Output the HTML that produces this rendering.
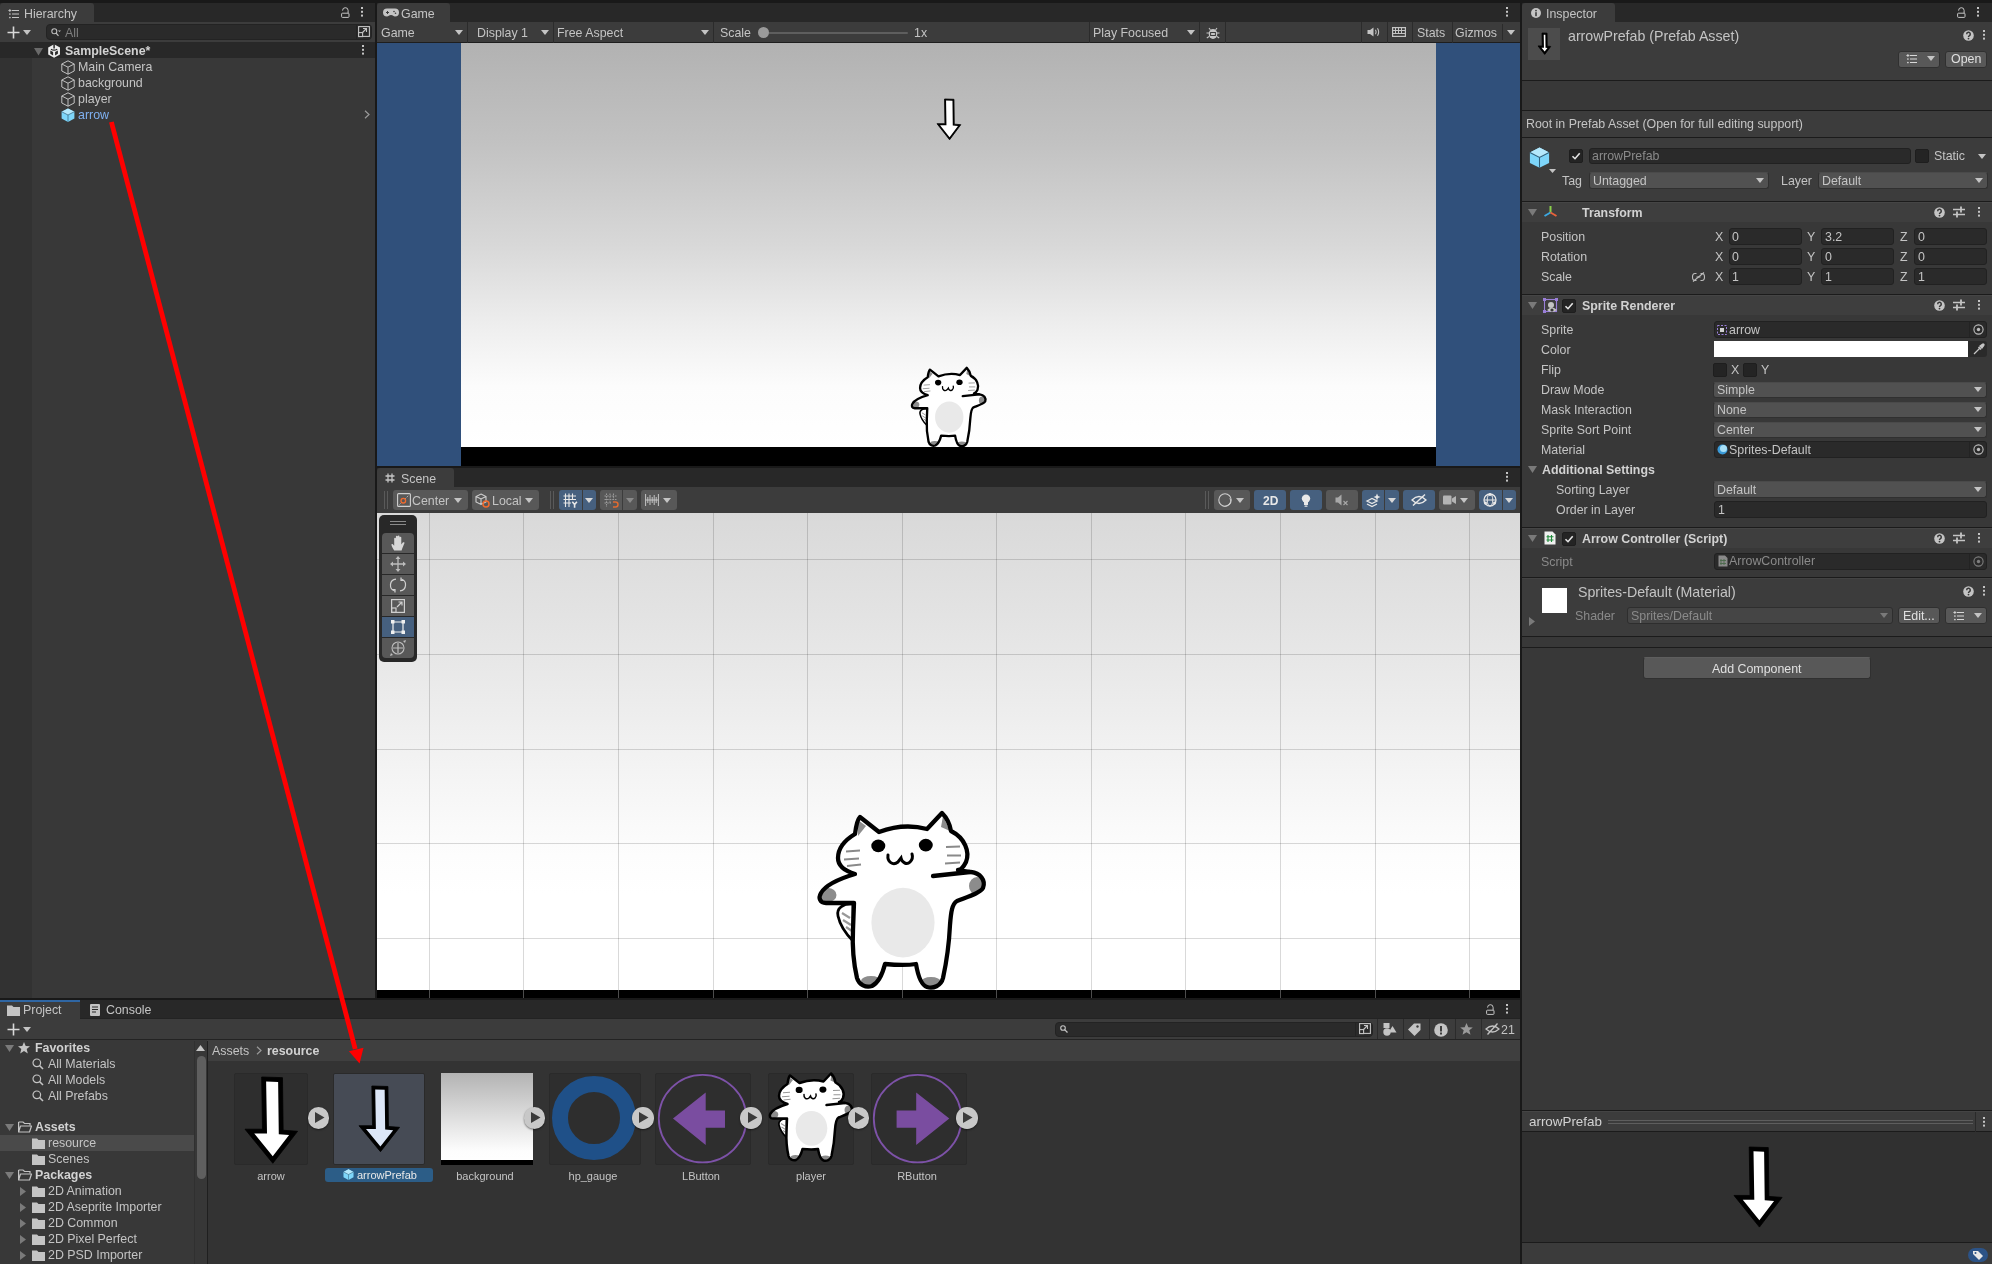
<!DOCTYPE html><html><head><meta charset="utf-8"><style>
*{box-sizing:border-box}
html,body{margin:0;padding:0}
body{-webkit-font-smoothing:antialiased;width:1992px;height:1264px;background:#191919;position:relative;overflow:hidden;font-family:"Liberation Sans",sans-serif;font-size:12.4px;color:#c4c4c4}
.a{position:absolute}
.t{position:absolute;white-space:pre;line-height:16px;height:16px;will-change:transform}
.b{font-weight:bold}
svg{overflow:visible}
</style></head><body><div class="a" style="left:0px;top:3px;width:375px;height:19px;background:#282828;"></div>
<div class="a" style="left:0px;top:3px;width:94px;height:19px;background:#3c3c3c;border-radius:3px 3px 0 0"></div>
<div class="a" style="left:0px;top:22px;width:375px;height:20px;background:#3c3c3c;"></div>
<div class="a" style="left:0px;top:42px;width:375px;height:16px;background:#282828;"></div>
<div class="a" style="left:0px;top:58px;width:375px;height:940px;background:#383838;"></div>
<div class="a" style="left:0px;top:58px;width:32px;height:940px;background:#323232;"></div>
<div class="a" style="left:377px;top:3px;width:1143px;height:19px;background:#282828;"></div>
<div class="a" style="left:377px;top:3px;width:73px;height:19px;background:#3c3c3c;border-radius:3px 3px 0 0"></div>
<div class="a" style="left:377px;top:22px;width:1143px;height:20px;background:#3c3c3c;"></div>
<div class="a" style="left:377px;top:42px;width:1143px;height:1px;background:#1e1e1e;"></div>
<div class="a" style="left:377px;top:43px;width:1143px;height:423px;background:#30507b;"></div>
<div class="a" style="left:461px;top:43px;width:975px;height:404px;background:linear-gradient(#b2b2b2,#c2c2c2 25%,#d8d8d8 50%,#eeeeee 70%,#fcfcfc 85%,#fff)"></div>
<div class="a" style="left:461px;top:447px;width:975px;height:19px;background:#000;"></div>
<div class="a" style="left:377px;top:468px;width:1143px;height:19px;background:#282828;"></div>
<div class="a" style="left:377px;top:468px;width:77px;height:19px;background:#3c3c3c;border-radius:3px 3px 0 0"></div>
<div class="a" style="left:377px;top:487px;width:1143px;height:26px;background:#3c3c3c;"></div>
<div class="a" style="left:377px;top:513px;width:1143px;height:477px;background:linear-gradient(#d9d9d9,#e7e7e7 30%,#efefef 45%,#f7f7f7 60%,#fdfdfd 72%,#ffffff 80%)"></div>
<div class="a" style="left:377px;top:990px;width:1143px;height:8px;background:#000;"></div>
<div class="a" style="left:1522px;top:3px;width:470px;height:19px;background:#282828;"></div>
<div class="a" style="left:1522px;top:3px;width:93px;height:19px;background:#3c3c3c;border-radius:3px 3px 0 0"></div>
<div class="a" style="left:1522px;top:22px;width:470px;height:1242px;background:#383838;"></div>
<div class="a" style="left:0px;top:1000px;width:1520px;height:18px;background:#282828;"></div>
<div class="a" style="left:0px;top:1000px;width:80px;height:19px;background:#3c3c3c;"></div>
<div class="a" style="left:0px;top:1000px;width:80px;height:2px;background:#2f66a3;"></div>
<div class="a" style="left:80px;top:1018px;width:1440px;height:1px;background:#232323;"></div>
<div class="a" style="left:0px;top:1019px;width:1520px;height:20px;background:#3c3c3c;"></div>
<div class="a" style="left:0px;top:1039px;width:1520px;height:1px;background:#232323;"></div>
<div class="a" style="left:0px;top:1040px;width:1520px;height:224px;background:#383838;"></div>
<div class="a" style="left:207px;top:1040px;width:1313px;height:21px;background:#3f3f3f;"></div>
<div class="a" style="left:207px;top:1061px;width:1313px;height:203px;background:#333333;"></div>
<svg class="a" style="left:7.5px;top:8.5px;" width="11" height="10" viewBox="0 0 11 10"><path d="M4 1.5H11M4 5H11M4 8.5H11" stroke="#c4c4c4" stroke-width="1.1"/><circle cx="1.9" cy="5" r="0.85" fill="#c4c4c4"/><circle cx="1.9" cy="8.5" r="0.85" fill="#c4c4c4"/><path d="M0.4 1.5H3.4M1.9 0V3" stroke="#c4c4c4" stroke-width="0.9"/></svg>
<div class="t" style="left:23.5px;top:6px;color:#c4c4c4">Hierarchy</div>
<svg class="a" style="left:340.5px;top:6.5px;" width="9" height="11" viewBox="0 0 9 11"><path d="M1.6 3.6A2.75 2.75 0 0 1 7.1 3.3V6.3" fill="none" stroke="#c4c4c4" stroke-width="1"/><rect x="0.6" y="6.2" width="7.4" height="4.2" rx="0.8" fill="none" stroke="#c4c4c4" stroke-width="1"/></svg>
<svg class="a" style="left:361px;top:7.2px;" width="2" height="9.6" viewBox="0 0 2 9.6"><rect x="0" y="0" width="2" height="2" fill="#c4c4c4"/><rect x="0" y="3.8" width="2" height="2" fill="#c4c4c4"/><rect x="0" y="7.6" width="2" height="2" fill="#c4c4c4"/></svg>
<svg class="a" style="left:6.5px;top:26px;" width="13" height="13" viewBox="0 0 13 13"><path d="M6.5 0.5V12.5M0.5 6.5H12.5" stroke="#d8d8d8" stroke-width="1.6"/></svg>
<svg class="a" style="left:23.0px;top:29.5px;" width="8" height="5" viewBox="0 0 8 5"><path d="M0 0H8L4.0 5Z" fill="#c4c4c4"/></svg>
<div class="a" style="left:46px;top:24px;width:326px;height:15.5px;background:#2a2a2a;border:1px solid #232323;border-radius:4px"></div>
<svg class="a" style="left:51px;top:27.5px;" width="10" height="9" viewBox="0 0 10 9"><circle cx="3.3" cy="3.3" r="2.5" fill="none" stroke="#bdbdbd" stroke-width="1.1"/><path d="M5 5L7.5 7.8" stroke="#bdbdbd" stroke-width="1.2"/><path d="M7 2.5H10L8.5 4Z" fill="#bdbdbd"/></svg>
<div class="t" style="left:65px;top:24.5px;color:#7f7f7f">All</div>
<div class="a" style="left:355.5px;top:24.5px;width:1px;height:14.5px;background:#232323;"></div>
<svg class="a" style="left:358px;top:26px;" width="12" height="11" viewBox="0 0 12 11"><rect x="0.6" y="0.6" width="10.8" height="9.8" fill="none" stroke="#c4c4c4" stroke-width="1.1"/><path d="M3.5 7.5L8.5 2.5M5 2.5H8.5V6" fill="none" stroke="#c4c4c4" stroke-width="1.1"/><rect x="0.6" y="6.6" width="4" height="4" fill="#2a2a2a" stroke="#c4c4c4" stroke-width="1.1"/></svg>
<svg class="a" style="left:34.0px;top:48.05px;" width="9" height="7.5" viewBox="0 0 9 7.5"><path d="M0 0H9L4.5 7.5Z" fill="#6a6a6a"/></svg>
<svg class="a" style="left:48px;top:43.8px;" width="12.2" height="14" viewBox="0 0 12.2 14"><path d="M6.1 0.3L12 3.6V10.4L6.1 13.8L0.2 10.4V3.6Z" fill="#ececec"/><path d="M6.1 0V4.5" stroke="#272727" stroke-width="1.5"/><path d="M3 5.2Q6.1 7.2 9.2 5.2" fill="none" stroke="#272727" stroke-width="1.3"/><path d="M2.3 6.5L5.1 8V11.5L2.3 9.8Z M9.9 6.5L7.1 8V11.5L9.9 9.8Z" fill="#272727"/></svg>
<div class="t" style="left:65px;top:42.5px;color:#d2d2d2;font-weight:bold">SampleScene*</div>
<svg class="a" style="left:362px;top:45.2px;" width="2" height="9.6" viewBox="0 0 2 9.6"><rect x="0" y="0" width="2" height="2" fill="#c4c4c4"/><rect x="0" y="3.8" width="2" height="2" fill="#c4c4c4"/><rect x="0" y="7.6" width="2" height="2" fill="#c4c4c4"/></svg>
<svg class="a" style="left:61px;top:59.5px;" width="14" height="15" viewBox="0 0 14 15"><path d="M7 0.8L13.2 4V11L7 14.2L0.8 11V4Z M0.8 4L7 7.2L13.2 4 M7 7.2V14.2" fill="none" stroke="#c8c8c8" stroke-width="0.95" stroke-linejoin="round"/></svg>
<div class="t" style="left:78px;top:59px;color:#c4c4c4">Main Camera</div>
<svg class="a" style="left:61px;top:75.5px;" width="14" height="15" viewBox="0 0 14 15"><path d="M7 0.8L13.2 4V11L7 14.2L0.8 11V4Z M0.8 4L7 7.2L13.2 4 M7 7.2V14.2" fill="none" stroke="#c8c8c8" stroke-width="0.95" stroke-linejoin="round"/></svg>
<div class="t" style="left:78px;top:75px;color:#c4c4c4">background</div>
<svg class="a" style="left:61px;top:91.5px;" width="14" height="15" viewBox="0 0 14 15"><path d="M7 0.8L13.2 4V11L7 14.2L0.8 11V4Z M0.8 4L7 7.2L13.2 4 M7 7.2V14.2" fill="none" stroke="#c8c8c8" stroke-width="0.95" stroke-linejoin="round"/></svg>
<div class="t" style="left:78px;top:91px;color:#c4c4c4">player</div>
<svg class="a" style="left:61px;top:107.5px;" width="14" height="14" viewBox="0 0 14 14"><path d="M7 0.4L13.4 3.7V10.6L7 13.9L0.6 10.6V3.7Z" fill="#7ed6fa"/><path d="M7 0.4L13.4 3.7L7 7L0.6 3.7Z" fill="#b4e8fc"/><path d="M0.6 3.7L7 7L13.4 3.7M7 7V13.9" fill="none" stroke="#2f5f7a" stroke-width="0.7"/></svg>
<div class="t" style="left:78px;top:107px;color:#7fb0f0">arrow</div>
<svg class="a" style="left:364px;top:110px;" width="6" height="9" viewBox="0 0 6 9"><path d="M1 0.8L5 4.5L1 8.2" fill="none" stroke="#9a9a9a" stroke-width="1.2"/></svg>
<svg class="a" style="left:384px;top:8px;" width="14" height="9" viewBox="0 0 14 9"><path d="M3 0.5H11A3 3 0 0 1 11 8.5C9.5 8.5 9 7 7 7S4.5 8.5 3 8.5A3 3 0 0 1 3 0.5Z" fill="#c4c4c4"/><path d="M2 4.5H5M3.5 3V6" stroke="#3c3c3c" stroke-width="1"/><circle cx="10" cy="3.5" r="0.8" fill="#3c3c3c"/><circle cx="11.5" cy="5.2" r="0.8" fill="#3c3c3c"/></svg>
<div class="t" style="left:401px;top:6px;color:#c4c4c4">Game</div>
<svg class="a" style="left:1506px;top:7.2px;" width="2" height="9.6" viewBox="0 0 2 9.6"><rect x="0" y="0" width="2" height="2" fill="#c4c4c4"/><rect x="0" y="3.8" width="2" height="2" fill="#c4c4c4"/><rect x="0" y="7.6" width="2" height="2" fill="#c4c4c4"/></svg>
<div class="t" style="left:381px;top:25px;color:#c4c4c4">Game</div>
<svg class="a" style="left:454.5px;top:29.5px;" width="8" height="5" viewBox="0 0 8 5"><path d="M0 0H8L4.0 5Z" fill="#c4c4c4"/></svg>
<div class="a" style="left:466.5px;top:22px;width:1px;height:20.5px;background:#2b2b2b;"></div>
<div class="t" style="left:477px;top:25px;color:#c4c4c4">Display 1</div>
<svg class="a" style="left:541.0px;top:29.5px;" width="8" height="5" viewBox="0 0 8 5"><path d="M0 0H8L4.0 5Z" fill="#c4c4c4"/></svg>
<div class="a" style="left:552.5px;top:22px;width:1px;height:20.5px;background:#2b2b2b;"></div>
<div class="t" style="left:557px;top:25px;color:#c4c4c4">Free Aspect</div>
<svg class="a" style="left:700.5px;top:29.5px;" width="8" height="5" viewBox="0 0 8 5"><path d="M0 0H8L4.0 5Z" fill="#c4c4c4"/></svg>
<div class="a" style="left:713px;top:22px;width:1px;height:20.5px;background:#2b2b2b;"></div>
<div class="t" style="left:720px;top:25px;color:#c4c4c4">Scale</div>
<div class="a" style="left:763px;top:31.5px;width:145px;height:2px;background:#5e5e5e;border-radius:1px"></div>
<div class="a" style="left:757.5px;top:27px;width:11px;height:11px;border-radius:50%;background:#9a9a9a"></div>
<div class="t" style="left:913.5px;top:25px;color:#c4c4c4">1x</div>
<div class="a" style="left:1089px;top:22px;width:1px;height:20.5px;background:#2b2b2b;"></div>
<div class="t" style="left:1093px;top:25px;color:#c4c4c4">Play Focused</div>
<svg class="a" style="left:1187.0px;top:29.5px;" width="8" height="5" viewBox="0 0 8 5"><path d="M0 0H8L4.0 5Z" fill="#c4c4c4"/></svg>
<div class="a" style="left:1199px;top:22px;width:1px;height:20.5px;background:#2b2b2b;"></div>
<svg class="a" style="left:1205.5px;top:24.5px;" width="14" height="15" viewBox="0 0 14 15"><path d="M3 3L4.5 5M11 3L9.5 5M0.5 8H3M13.5 8H11M0.8 13L3 11.5M13.2 13L11 11.5" stroke="#c4c4c4" stroke-width="1.1"/><ellipse cx="7" cy="9" rx="4.3" ry="5" fill="#c4c4c4"/><rect x="4.6" y="7.5" width="4.8" height="3" fill="none" stroke="#3c3c3c" stroke-width="1"/></svg>
<div class="a" style="left:1225px;top:22px;width:1px;height:20.5px;background:#2b2b2b;"></div>
<div class="a" style="left:1360.5px;top:22px;width:1px;height:20.5px;background:#2b2b2b;"></div>
<svg class="a" style="left:1366.5px;top:27px;" width="13" height="10" viewBox="0 0 13 10"><path d="M0.5 3H3L6.5 0.5V9.5L3 7H0.5Z" fill="#c4c4c4"/><path d="M8.5 2.8Q9.8 5 8.5 7.2M10.5 1.2Q12.8 5 10.5 8.8" fill="none" stroke="#c4c4c4" stroke-width="1.1"/></svg>
<div class="a" style="left:1386.5px;top:22px;width:1px;height:20.5px;background:#2b2b2b;"></div>
<svg class="a" style="left:1392px;top:27px;" width="14" height="10" viewBox="0 0 14 10"><rect x="0.6" y="0.6" width="12.8" height="8.8" fill="none" stroke="#c4c4c4" stroke-width="1.2"/><path d="M0.6 3.5H13.4M0.6 6.5H13.4M3.5 0.6V6.5M6.5 0.6V6.5M9.5 0.6V6.5" stroke="#c4c4c4" stroke-width="1"/></svg>
<div class="a" style="left:1412px;top:22px;width:1px;height:20.5px;background:#2b2b2b;"></div>
<div class="t" style="left:1416.5px;top:25px;color:#c4c4c4">Stats</div>
<div class="a" style="left:1451.5px;top:22px;width:1px;height:20.5px;background:#2b2b2b;"></div>
<div class="t" style="left:1455px;top:25px;color:#c4c4c4">Gizmos</div>
<div class="a" style="left:1501.5px;top:24px;width:1px;height:16px;background:#2b2b2b;"></div>
<svg class="a" style="left:1507.0px;top:29.5px;" width="8" height="5" viewBox="0 0 8 5"><path d="M0 0H8L4.0 5Z" fill="#c4c4c4"/></svg>
<svg class="a" style="left:936.9px;top:98.6px" width="23.80" height="40.80" viewBox="0 0 23.80 40.80"><path d="M7.54,0.00 L16.96,0.30 L17.25,25.18 L23.80,25.67 L12.59,40.80 L0.00,24.68 L7.93,24.68Z" fill="#000" stroke="#000" stroke-width="0.8" stroke-linejoin="round"/><path d="M9.06,1.55 L15.47,1.75 L15.77,26.57 L20.98,26.96 L12.56,38.32 L3.08,26.18 L9.46,26.18Z" fill="#fff"/></svg>
<svg class="a" style="left:903px;top:361.6px" width="89.8" height="89.8" viewBox="0 0 200 200">
<defs><clipPath id="catclip1"><path d="M55,34 C56,26 57,20 60,17 L79,32 C95,26 112,25 127,29 L142,13 C147,18 150,25 151,31 C165,38 170,52 166,62 C163,68 160,70 158,70 L171,72 C180,73 186,80 183,88 C180,93 170,96 157,101 C152,104 151,112 150,125 C149,145 147,160 143,178 C141,186 133,189 127,187 C121,185 118,176 116,164 C110,165 95,165 85,164 C83,172 80,182 72,186 C66,188 59,185 57,178 C54,165 52,150 53,130 L54,103 L26,103 C20,103 18,98 21,93 C25,86 35,80 55,74 C45,71 38,66 38,58 C38,48 45,40 55,34 Z"/></clipPath></defs>
<path d="M53,104 C44,103 36,108 38,116 C40,125 46,134 53,141 Z" fill="#fff" stroke="#000" stroke-width="3.38" stroke-linejoin="round"/>
<path d="M42,113 L50,118 M43,120 L51,125 M46,127 L52,131" stroke="#999" stroke-width="2.2"/>
<path d="M55,34 C56,26 57,20 60,17 L79,32 C95,26 112,25 127,29 L142,13 C147,18 150,25 151,31 C165,38 170,52 166,62 C163,68 160,70 158,70 L171,72 C180,73 186,80 183,88 C180,93 170,96 157,101 C152,104 151,112 150,125 C149,145 147,160 143,178 C141,186 133,189 127,187 C121,185 118,176 116,164 C110,165 95,165 85,164 C83,172 80,182 72,186 C66,188 59,185 57,178 C54,165 52,150 53,130 L54,103 L26,103 C20,103 18,98 21,93 C25,86 35,80 55,74 C45,71 38,66 38,58 C38,48 45,40 55,34 Z" fill="#fff"/>
<g clip-path="url(#catclip1)" fill="#8c8c8c">
<ellipse cx="28" cy="95" rx="8.5" ry="7"/><ellipse cx="177" cy="86" rx="8" ry="9"/>
<ellipse cx="71" cy="181" rx="10" ry="5"/><ellipse cx="131" cy="182" rx="10" ry="5"/>
<path d="M58,20 L66,26 L58,36Z"/><path d="M143,16 L150,31 L141,27Z"/>
</g>
<ellipse cx="103" cy="122.6" rx="31.6" ry="34.8" fill="#e9e9e9"/>
<path d="M55,34 C56,26 57,20 60,17 L79,32 C95,26 112,25 127,29 L142,13 C147,18 150,25 151,31 C165,38 170,52 166,62 C163,68 160,70 158,70 L171,72 C180,73 186,80 183,88 C180,93 170,96 157,101 C152,104 151,112 150,125 C149,145 147,160 143,178 C141,186 133,189 127,187 C121,185 118,176 116,164 C110,165 95,165 85,164 C83,172 80,182 72,186 C66,188 59,185 57,178 C54,165 52,150 53,130 L54,103 L26,103 C20,103 18,98 21,93 C25,86 35,80 55,74 C45,71 38,66 38,58 C38,48 45,40 55,34 Z" fill="none" stroke="#000" stroke-width="5.2" stroke-linejoin="round"/>
<path d="M133,76 Q152,74 170,72" fill="none" stroke="#000" stroke-width="5.2" stroke-linecap="round"/>
<ellipse cx="78.3" cy="45.9" rx="7" ry="6.3" fill="#000"/><ellipse cx="125.8" cy="45.1" rx="7" ry="6.3" fill="#000"/>
<path d="M88,55 C87,62 93,66 98,62 L101,58 C102,63 107,65 110,62 C112,60 113,57 112,54" fill="none" stroke="#000" stroke-width="3" stroke-linecap="round"/>
<path d="M46,51.5 L60,50.5 M44,59.5 L59,58.5 M47,66 L61,64.5 M146,47 L160,46.5 M147,55.5 L161,55.5 M145,63.5 L160,62.5" stroke="#8a8a8a" stroke-width="1.8"/>
</svg>
<svg class="a" style="left:385px;top:473px;" width="10" height="10" viewBox="0 0 10 10"><path d="M3 0.5V9.5M7 0.5V9.5M0.5 3H9.5M0.5 7H9.5" stroke="#c4c4c4" stroke-width="1.3"/></svg>
<div class="t" style="left:401px;top:471px;color:#c4c4c4">Scene</div>
<svg class="a" style="left:1506px;top:472.2px;" width="2" height="9.6" viewBox="0 0 2 9.6"><rect x="0" y="0" width="2" height="2" fill="#c4c4c4"/><rect x="0" y="3.8" width="2" height="2" fill="#c4c4c4"/><rect x="0" y="7.6" width="2" height="2" fill="#c4c4c4"/></svg>
<div class="a" style="left:383.5px;top:491px;width:1px;height:18px;background:#5a5a5a;"></div>
<div class="a" style="left:386.5px;top:491px;width:1px;height:18px;background:#5a5a5a;"></div>
<div class="a" style="left:393px;top:490px;width:75px;height:20px;background:#585858;border-radius:3px"></div>
<svg class="a" style="left:396.5px;top:493px;" width="14" height="14" viewBox="0 0 14 14"><rect x="0.6" y="0.6" width="12.8" height="12.8" rx="1" fill="none" stroke="#d0d0d0" stroke-width="1.1"/><path d="M2.5 11.5L11.5 2.5" stroke="#c8c8c8" stroke-width="0.9" stroke-dasharray="1.5 1.2"/><circle cx="6.3" cy="7.7" r="2.3" fill="#585858" stroke="#f26b2e" stroke-width="1.3"/></svg>
<div class="t" style="left:412px;top:492.5px;color:#c4c4c4">Center</div>
<svg class="a" style="left:454.0px;top:497.5px;" width="8" height="5" viewBox="0 0 8 5"><path d="M0 0H8L4.0 5Z" fill="#c4c4c4"/></svg>
<div class="a" style="left:472px;top:490px;width:67px;height:20px;background:#585858;border-radius:3px"></div>
<svg class="a" style="left:475px;top:492.5px;" width="15" height="15" viewBox="0 0 15 15"><path d="M6 1L11 3.5V9L6 11.5L1 9V3.5Z M1 3.5L6 6L11 3.5 M6 6V11.5" fill="none" stroke="#cfcfcf" stroke-width="1.1"/><circle cx="11" cy="11" r="3" fill="none" stroke="#f26b2e" stroke-width="1.5"/></svg>
<div class="t" style="left:491.5px;top:492.5px;color:#c4c4c4">Local</div>
<svg class="a" style="left:525.0px;top:497.5px;" width="8" height="5" viewBox="0 0 8 5"><path d="M0 0H8L4.0 5Z" fill="#c4c4c4"/></svg>
<div class="a" style="left:549.5px;top:491px;width:1px;height:18px;background:#5a5a5a;"></div>
<div class="a" style="left:552.5px;top:491px;width:1px;height:18px;background:#5a5a5a;"></div>
<div class="a" style="left:559px;top:490px;width:37px;height:20px;background:#46607f;border-radius:3px"></div>
<div class="a" style="left:581.5px;top:490px;width:1px;height:20px;background:#3c3c3c;"></div>
<svg class="a" style="left:563px;top:492.5px;" width="16" height="15" viewBox="0 0 16 15"><path d="M2.5 0.5V14M6 0.5V14M9.5 0.5V7M0.5 3H13M0.5 6.5H13M0.5 10H8" stroke="#e8e8e8" stroke-width="1.1"/><path d="M9.3 8.8L11.6 11.6L13.9 8.8M11.6 11.6V14.8" fill="none" stroke="#e8e8e8" stroke-width="1.6"/></svg>
<svg class="a" style="left:585.0px;top:497.5px;" width="8" height="5" viewBox="0 0 8 5"><path d="M0 0H8L4.0 5Z" fill="#d8d8d8"/></svg>
<div class="a" style="left:600px;top:490px;width:37px;height:20px;background:#585858;border-radius:3px"></div>
<div class="a" style="left:622px;top:490px;width:1px;height:20px;background:#3c3c3c;"></div>
<svg class="a" style="left:604px;top:492.5px;" width="16" height="15" viewBox="0 0 16 15"><path d="M2.5 0.5V14M6 0.5V10M9.5 0.5V7M0.5 3H13M0.5 6.5H13M0.5 10H7" stroke="#9a9a9a" stroke-width="1.1" stroke-dasharray="1.6 1"/><path d="M9 9H11.5A2.5 2.5 0 0 1 11.5 14H9" fill="none" stroke="#e06a30" stroke-width="1.5"/></svg>
<svg class="a" style="left:626.0px;top:497.5px;" width="8" height="5" viewBox="0 0 8 5"><path d="M0 0H8L4.0 5Z" fill="#8a8a8a"/></svg>
<div class="a" style="left:641px;top:490px;width:36px;height:20px;background:#585858;border-radius:3px"></div>
<svg class="a" style="left:645px;top:493px;" width="14" height="14" viewBox="0 0 14 14"><path d="M0.6 1V13M13.4 1V13M2.8 4V10M5 2V12M7.2 4V10M9.2 2V12M11.2 4V10M0.6 7H13.4" stroke="#d0d0d0" stroke-width="0.9"/></svg>
<svg class="a" style="left:663.0px;top:497.5px;" width="8" height="5" viewBox="0 0 8 5"><path d="M0 0H8L4.0 5Z" fill="#c4c4c4"/></svg>
<div class="a" style="left:1204.5px;top:491px;width:1px;height:18px;background:#5a5a5a;"></div>
<div class="a" style="left:1207.5px;top:491px;width:1px;height:18px;background:#5a5a5a;"></div>
<div class="a" style="left:1214px;top:490px;width:36px;height:20px;background:#585858;border-radius:3px"></div>
<svg class="a" style="left:1217.5px;top:493px;" width="14" height="14" viewBox="0 0 14 14"><circle cx="7" cy="7" r="6.2" fill="none" stroke="#cfcfcf" stroke-width="1.1"/><path d="M13 6.5A6.2 6.2 0 0 1 3 12.2A6 5 0 0 0 11 5Z" fill="#cfcfcf"/></svg>
<svg class="a" style="left:1236.0px;top:497.5px;" width="8" height="5" viewBox="0 0 8 5"><path d="M0 0H8L4.0 5Z" fill="#c4c4c4"/></svg>
<div class="a" style="left:1254px;top:490px;width:32px;height:20px;background:#46607f;border-radius:3px"></div>
<div class="t" style="left:1263px;top:492.5px;color:#e8e8e8;font-weight:bold;font-size:12px">2D</div>
<div class="a" style="left:1290px;top:490px;width:32px;height:20px;background:#46607f;border-radius:3px"></div>
<svg class="a" style="left:1301px;top:493.5px;" width="10" height="13" viewBox="0 0 10 13"><circle cx="5" cy="4.6" r="4.2" fill="#e8e8e8"/><rect x="3" y="8" width="4" height="3" fill="#e8e8e8"/><rect x="3.5" y="11.5" width="3" height="1.3" rx="0.6" fill="#e8e8e8"/></svg>
<div class="a" style="left:1326px;top:490px;width:32px;height:20px;background:#585858;border-radius:3px"></div>
<svg class="a" style="left:1335px;top:494px;" width="14" height="12" viewBox="0 0 14 12"><path d="M0.5 3.5H3L6.5 0.5V11.5L3 8.5H0.5Z" fill="#a8a8a8"/><path d="M8.5 7L12.5 11M12.5 7L8.5 11" stroke="#a8a8a8" stroke-width="1.1"/></svg>
<div class="a" style="left:1362px;top:490px;width:37px;height:20px;background:#46607f;border-radius:3px"></div>
<div class="a" style="left:1384px;top:490px;width:1px;height:20px;background:#3c3c3c;"></div>
<svg class="a" style="left:1366px;top:493px;" width="15" height="14" viewBox="0 0 15 14"><path d="M1 8L6 5.5L11 8L6 10.5Z" fill="none" stroke="#e8e8e8" stroke-width="1.3"/><path d="M1 11L6 13.5L11 11" fill="none" stroke="#e8e8e8" stroke-width="1.3"/><path d="M11 0.5L12 3L14.5 4L12 5L11 7.5L10 5L7.5 4L10 3Z" fill="#e8e8e8"/></svg>
<svg class="a" style="left:1387.5px;top:497.5px;" width="8" height="5" viewBox="0 0 8 5"><path d="M0 0H8L4.0 5Z" fill="#d8d8d8"/></svg>
<div class="a" style="left:1403px;top:490px;width:32px;height:20px;background:#46607f;border-radius:3px"></div>
<svg class="a" style="left:1411px;top:494px;" width="16" height="12" viewBox="0 0 16 12"><path d="M1 6Q8 -1 15 6Q8 13 1 6Z" fill="none" stroke="#e8e8e8" stroke-width="1.3"/><path d="M2 11.5L14 0.5" stroke="#e8e8e8" stroke-width="1.4"/></svg>
<div class="a" style="left:1439px;top:490px;width:36px;height:20px;background:#585858;border-radius:3px"></div>
<svg class="a" style="left:1443px;top:495px;" width="13" height="10" viewBox="0 0 13 10"><rect x="0" y="0.5" width="8.5" height="9" rx="1" fill="#b4b4b4"/><path d="M9 3.5L13 1V9L9 6.5Z" fill="#b4b4b4"/></svg>
<svg class="a" style="left:1460.0px;top:497.5px;" width="8" height="5" viewBox="0 0 8 5"><path d="M0 0H8L4.0 5Z" fill="#c4c4c4"/></svg>
<div class="a" style="left:1479px;top:490px;width:37px;height:20px;background:#46607f;border-radius:3px"></div>
<div class="a" style="left:1501.5px;top:490px;width:1px;height:20px;background:#3c3c3c;"></div>
<svg class="a" style="left:1483px;top:493px;" width="14" height="14" viewBox="0 0 14 14"><circle cx="7" cy="7" r="6" fill="none" stroke="#e8e8e8" stroke-width="1.3"/><ellipse cx="7" cy="7" rx="2.8" ry="6" fill="none" stroke="#e8e8e8" stroke-width="1"/><path d="M1 7H13" stroke="#e8e8e8" stroke-width="1"/><circle cx="7" cy="1.5" r="1.5" fill="#e8e8e8"/><circle cx="2.5" cy="10" r="1.5" fill="#e8e8e8"/><circle cx="11.5" cy="10" r="1.5" fill="#e8e8e8"/></svg>
<svg class="a" style="left:1505.0px;top:497.5px;" width="8" height="5" viewBox="0 0 8 5"><path d="M0 0H8L4.0 5Z" fill="#d8d8d8"/></svg>
<div class="a" style="left:429px;top:513px;width:1px;height:477px;background:rgba(0,0,0,0.15)"></div>
<div class="a" style="left:429px;top:990px;width:1px;height:8px;background:rgba(255,255,255,0.3)"></div>
<div class="a" style="left:523px;top:513px;width:1px;height:477px;background:rgba(0,0,0,0.15)"></div>
<div class="a" style="left:523px;top:990px;width:1px;height:8px;background:rgba(255,255,255,0.3)"></div>
<div class="a" style="left:618px;top:513px;width:1px;height:477px;background:rgba(0,0,0,0.15)"></div>
<div class="a" style="left:618px;top:990px;width:1px;height:8px;background:rgba(255,255,255,0.3)"></div>
<div class="a" style="left:713px;top:513px;width:1px;height:477px;background:rgba(0,0,0,0.15)"></div>
<div class="a" style="left:713px;top:990px;width:1px;height:8px;background:rgba(255,255,255,0.3)"></div>
<div class="a" style="left:807px;top:513px;width:1px;height:477px;background:rgba(0,0,0,0.15)"></div>
<div class="a" style="left:807px;top:990px;width:1px;height:8px;background:rgba(255,255,255,0.3)"></div>
<div class="a" style="left:902px;top:513px;width:1px;height:477px;background:rgba(0,0,0,0.15)"></div>
<div class="a" style="left:902px;top:990px;width:1px;height:8px;background:rgba(255,255,255,0.3)"></div>
<div class="a" style="left:996px;top:513px;width:1px;height:477px;background:rgba(0,0,0,0.15)"></div>
<div class="a" style="left:996px;top:990px;width:1px;height:8px;background:rgba(255,255,255,0.3)"></div>
<div class="a" style="left:1091px;top:513px;width:1px;height:477px;background:rgba(0,0,0,0.15)"></div>
<div class="a" style="left:1091px;top:990px;width:1px;height:8px;background:rgba(255,255,255,0.3)"></div>
<div class="a" style="left:1185px;top:513px;width:1px;height:477px;background:rgba(0,0,0,0.15)"></div>
<div class="a" style="left:1185px;top:990px;width:1px;height:8px;background:rgba(255,255,255,0.3)"></div>
<div class="a" style="left:1280px;top:513px;width:1px;height:477px;background:rgba(0,0,0,0.15)"></div>
<div class="a" style="left:1280px;top:990px;width:1px;height:8px;background:rgba(255,255,255,0.3)"></div>
<div class="a" style="left:1375px;top:513px;width:1px;height:477px;background:rgba(0,0,0,0.15)"></div>
<div class="a" style="left:1375px;top:990px;width:1px;height:8px;background:rgba(255,255,255,0.3)"></div>
<div class="a" style="left:1469px;top:513px;width:1px;height:477px;background:rgba(0,0,0,0.15)"></div>
<div class="a" style="left:1469px;top:990px;width:1px;height:8px;background:rgba(255,255,255,0.3)"></div>
<div class="a" style="left:377px;top:559px;width:1143px;height:1px;background:rgba(0,0,0,0.15)"></div>
<div class="a" style="left:377px;top:654px;width:1143px;height:1px;background:rgba(0,0,0,0.15)"></div>
<div class="a" style="left:377px;top:749px;width:1143px;height:1px;background:rgba(0,0,0,0.15)"></div>
<div class="a" style="left:377px;top:843px;width:1143px;height:1px;background:rgba(0,0,0,0.15)"></div>
<div class="a" style="left:377px;top:938px;width:1143px;height:1px;background:rgba(0,0,0,0.15)"></div>
<svg class="a" style="left:800px;top:800px" width="200.0" height="200.0" viewBox="0 0 200 200">
<defs><clipPath id="catclip2"><path d="M55,34 C56,26 57,20 60,17 L79,32 C95,26 112,25 127,29 L142,13 C147,18 150,25 151,31 C165,38 170,52 166,62 C163,68 160,70 158,70 L171,72 C180,73 186,80 183,88 C180,93 170,96 157,101 C152,104 151,112 150,125 C149,145 147,160 143,178 C141,186 133,189 127,187 C121,185 118,176 116,164 C110,165 95,165 85,164 C83,172 80,182 72,186 C66,188 59,185 57,178 C54,165 52,150 53,130 L54,103 L26,103 C20,103 18,98 21,93 C25,86 35,80 55,74 C45,71 38,66 38,58 C38,48 45,40 55,34 Z"/></clipPath></defs>
<path d="M53,104 C44,103 36,108 38,116 C40,125 46,134 53,141 Z" fill="#fff" stroke="#000" stroke-width="2.79" stroke-linejoin="round"/>
<path d="M42,113 L50,118 M43,120 L51,125 M46,127 L52,131" stroke="#999" stroke-width="2.2"/>
<path d="M55,34 C56,26 57,20 60,17 L79,32 C95,26 112,25 127,29 L142,13 C147,18 150,25 151,31 C165,38 170,52 166,62 C163,68 160,70 158,70 L171,72 C180,73 186,80 183,88 C180,93 170,96 157,101 C152,104 151,112 150,125 C149,145 147,160 143,178 C141,186 133,189 127,187 C121,185 118,176 116,164 C110,165 95,165 85,164 C83,172 80,182 72,186 C66,188 59,185 57,178 C54,165 52,150 53,130 L54,103 L26,103 C20,103 18,98 21,93 C25,86 35,80 55,74 C45,71 38,66 38,58 C38,48 45,40 55,34 Z" fill="#fff"/>
<g clip-path="url(#catclip2)" fill="#8c8c8c">
<ellipse cx="28" cy="95" rx="8.5" ry="7"/><ellipse cx="177" cy="86" rx="8" ry="9"/>
<ellipse cx="71" cy="181" rx="10" ry="5"/><ellipse cx="131" cy="182" rx="10" ry="5"/>
<path d="M58,20 L66,26 L58,36Z"/><path d="M143,16 L150,31 L141,27Z"/>
</g>
<ellipse cx="103" cy="122.6" rx="31.6" ry="34.8" fill="#e9e9e9"/>
<path d="M55,34 C56,26 57,20 60,17 L79,32 C95,26 112,25 127,29 L142,13 C147,18 150,25 151,31 C165,38 170,52 166,62 C163,68 160,70 158,70 L171,72 C180,73 186,80 183,88 C180,93 170,96 157,101 C152,104 151,112 150,125 C149,145 147,160 143,178 C141,186 133,189 127,187 C121,185 118,176 116,164 C110,165 95,165 85,164 C83,172 80,182 72,186 C66,188 59,185 57,178 C54,165 52,150 53,130 L54,103 L26,103 C20,103 18,98 21,93 C25,86 35,80 55,74 C45,71 38,66 38,58 C38,48 45,40 55,34 Z" fill="none" stroke="#000" stroke-width="4.3" stroke-linejoin="round"/>
<path d="M133,76 Q152,74 170,72" fill="none" stroke="#000" stroke-width="4.3" stroke-linecap="round"/>
<ellipse cx="78.3" cy="45.9" rx="7" ry="6.3" fill="#000"/><ellipse cx="125.8" cy="45.1" rx="7" ry="6.3" fill="#000"/>
<path d="M88,55 C87,62 93,66 98,62 L101,58 C102,63 107,65 110,62 C112,60 113,57 112,54" fill="none" stroke="#000" stroke-width="3" stroke-linecap="round"/>
<path d="M46,51.5 L60,50.5 M44,59.5 L59,58.5 M47,66 L61,64.5 M146,47 L160,46.5 M147,55.5 L161,55.5 M145,63.5 L160,62.5" stroke="#8a8a8a" stroke-width="1.8"/>
</svg>
<div class="a" style="left:379px;top:515px;width:38px;height:147px;background:#282828;border-radius:5px"></div>
<div class="a" style="left:390px;top:520.5px;width:16px;height:1px;background:#8a8a8a;"></div>
<div class="a" style="left:390px;top:523.5px;width:16px;height:1px;background:#8a8a8a;"></div>
<div class="a" style="left:382px;top:533px;width:32px;height:20px;background:#585858;border-radius:4px 4px 0 0"></div>
<div class="a" style="left:382px;top:554px;width:32px;height:20px;background:#585858;border-radius:0"></div>
<div class="a" style="left:382px;top:575px;width:32px;height:20px;background:#585858;border-radius:0"></div>
<div class="a" style="left:382px;top:596px;width:32px;height:20px;background:#585858;border-radius:0"></div>
<div class="a" style="left:382px;top:617px;width:32px;height:20px;background:#46607f;border-radius:0"></div>
<div class="a" style="left:382px;top:638px;width:32px;height:20px;background:#585858;border-radius:0 0 4px 4px"></div>
<svg class="a" style="left:390.5px;top:534.5px;" width="15" height="16" viewBox="0 0 15 16"><path d="M3.2 15.5C2 13.5 0.6 11.5 0.4 9.8C0.3 8.9 1.2 8.6 1.8 9.2L3.2 10.8V3.6C3.2 2.6 4.9 2.6 4.9 3.6V8.2V1.5C4.9 0.5 6.7 0.5 6.7 1.5V8.2V1.2C6.7 0.2 8.5 0.2 8.5 1.2V8.2V2.4C8.5 1.4 10.3 1.4 10.3 2.4V9.6L11.8 7.6C12.4 6.8 13.9 7.2 13.4 8.3C12.6 10.2 11.6 12.5 10.6 15.5Z" fill="#d8d8d8"/></svg>
<svg class="a" style="left:390px;top:556px;" width="16" height="16" viewBox="0 0 16 16"><path d="M8 1V15M1 8H15" stroke="#bdbdbd" stroke-width="1.3"/><path d="M8 0L5.5 3H10.5ZM8 16L5.5 13H10.5ZM0 8L3 5.5V10.5ZM16 8L13 5.5V10.5Z" fill="#bdbdbd"/></svg>
<svg class="a" style="left:391px;top:577px;" width="14" height="16" viewBox="0 0 14 16"><path d="M5 2.2A6 6 0 0 0 4 14M9 13.8A6 6 0 0 0 10 2" fill="none" stroke="#cfcfcf" stroke-width="1.2"/><path d="M10 0.5V3.5H13M4 15.5V12.5H1" fill="none" stroke="#cfcfcf" stroke-width="1.2"/></svg>
<svg class="a" style="left:391px;top:599px;" width="14" height="14" viewBox="0 0 14 14"><rect x="0.6" y="0.6" width="12.8" height="12.8" fill="none" stroke="#cfcfcf" stroke-width="1.2"/><rect x="0.6" y="9" width="4.4" height="4.4" fill="none" stroke="#cfcfcf" stroke-width="1.2"/><path d="M6 8L11 3M7.5 3H11V6.5" fill="none" stroke="#cfcfcf" stroke-width="1.2"/></svg>
<svg class="a" style="left:391px;top:620px;" width="14" height="14" viewBox="0 0 14 14"><path d="M2 3V11M12 3V11M3 2H11M3 12H11" stroke="#f0f0f0" stroke-width="1.2"/><rect x="0" y="0" width="3.5" height="3.5" fill="#f0f0f0"/><rect x="10.5" y="0" width="3.5" height="3.5" fill="#f0f0f0"/><rect x="0" y="10.5" width="3.5" height="3.5" fill="#f0f0f0"/><rect x="10.5" y="10.5" width="3.5" height="3.5" fill="#f0f0f0"/></svg>
<svg class="a" style="left:390px;top:640px;" width="16" height="16" viewBox="0 0 16 16"><circle cx="8" cy="8" r="6" fill="none" stroke="#bdbdbd" stroke-width="1.1"/><path d="M8 3V13M3 8H13" stroke="#bdbdbd" stroke-width="1.2"/><path d="M0 16L3 15L1 13Z M16 0L13 1L15 3Z" fill="#bdbdbd"/></svg>
<svg class="a" style="left:1531px;top:8px;" width="10" height="10" viewBox="0 0 10 10"><circle cx="5" cy="5" r="5" fill="#c4c4c4"/><rect x="4.2" y="4.2" width="1.6" height="4" fill="#3c3c3c"/><circle cx="5" cy="2.6" r="0.9" fill="#3c3c3c"/></svg>
<div class="t" style="left:1546px;top:6px;color:#c4c4c4">Inspector</div>
<svg class="a" style="left:1956.5px;top:6.5px;" width="9" height="11" viewBox="0 0 9 11"><path d="M1.6 3.6A2.75 2.75 0 0 1 7.1 3.3V6.3" fill="none" stroke="#c4c4c4" stroke-width="1"/><rect x="0.6" y="6.2" width="7.4" height="4.2" rx="0.8" fill="none" stroke="#c4c4c4" stroke-width="1"/></svg>
<svg class="a" style="left:1977px;top:7.2px;" width="2" height="9.6" viewBox="0 0 2 9.6"><rect x="0" y="0" width="2" height="2" fill="#c4c4c4"/><rect x="0" y="3.8" width="2" height="2" fill="#c4c4c4"/><rect x="0" y="7.6" width="2" height="2" fill="#c4c4c4"/></svg>
<div class="a" style="left:1522px;top:22px;width:470px;height:58px;background:#3c3c3c;"></div>
<div class="a" style="left:1522px;top:80px;width:470px;height:1px;background:#1b1b1b;"></div>
<div class="a" style="left:1522px;top:81px;width:470px;height:29px;background:#383838;"></div>
<div class="a" style="left:1522px;top:110px;width:470px;height:1px;background:#1b1b1b;"></div>
<div class="a" style="left:1522px;top:111px;width:470px;height:26px;background:#3c3c3c;"></div>
<div class="a" style="left:1522px;top:137px;width:470px;height:1px;background:#1b1b1b;"></div>
<div class="a" style="left:1528px;top:28px;width:32px;height:32px;background:#4c4c4c;"></div>
<svg class="a" style="left:1538px;top:33.4px" width="12.70" height="21.40" viewBox="0 0 12.70 21.40"><path d="M4.02,0.00 L9.05,0.16 L9.21,13.21 L12.70,13.47 L6.72,21.40 L0.00,12.94 L4.23,12.94Z" fill="#000" stroke="#000" stroke-width="0.8" stroke-linejoin="round"/><path d="M5.75,1.75 L7.37,1.81 L7.53,14.78 L9.47,14.93 L6.68,18.62 L3.52,14.64 L5.96,14.64Z" fill="#fff"/></svg>
<div class="t" style="left:1568px;top:26.8px;color:#c4c4c4;font-size:14.2px;line-height:18px;height:18px">arrowPrefab (Prefab Asset)</div>
<svg class="a" style="left:1962.5px;top:29.5px;" width="11" height="11" viewBox="0 0 11 11"><circle cx="5.5" cy="5.5" r="5.3" fill="#c4c4c4"/><path d="M3.7 4.2A1.8 1.8 0 1 1 6.2 5.8C5.6 6.1 5.5 6.4 5.5 7" fill="none" stroke="#383838" stroke-width="1.5"/><circle cx="5.5" cy="8.6" r="0.9" fill="#383838"/></svg>
<svg class="a" style="left:1983px;top:30.2px;" width="2" height="9.6" viewBox="0 0 2 9.6"><rect x="0" y="0" width="2" height="2" fill="#c4c4c4"/><rect x="0" y="3.8" width="2" height="2" fill="#c4c4c4"/><rect x="0" y="7.6" width="2" height="2" fill="#c4c4c4"/></svg>
<div class="a" style="left:1898px;top:50.5px;width:42px;height:17px;background:#585858;border:1px solid #303030;border-radius:3px"></div>
<svg class="a" style="left:1906px;top:53.5px;" width="13" height="10" viewBox="0 0 13 10"><path d="M4 1.5H11M4 5H11M4 8.5H11" stroke="#d8d8d8" stroke-width="1.1"/><circle cx="1.9" cy="5" r="0.85" fill="#d8d8d8"/><circle cx="1.9" cy="8.5" r="0.85" fill="#d8d8d8"/><path d="M0.4 1.5H3.4M1.9 0V3" stroke="#d8d8d8" stroke-width="0.9"/></svg>
<svg class="a" style="left:1927.0px;top:56.3px;" width="8" height="5" viewBox="0 0 8 5"><path d="M0 0H8L4.0 5Z" fill="#c4c4c4"/></svg>
<div class="a" style="left:1944.5px;top:50.5px;width:42.5px;height:17px;background:#585858;border:1px solid #303030;border-radius:3px"></div>
<div class="t" style="left:1950.5px;top:51.2px;color:#e0e0e0">Open</div>
<div class="t" style="left:1526px;top:116px;color:#c4c4c4">Root in Prefab Asset (Open for full editing support)</div>
<div class="a" style="left:1522px;top:138px;width:470px;height:63px;background:#3c3c3c;"></div>
<div class="a" style="left:1522px;top:201px;width:470px;height:1px;background:#1b1b1b;"></div>
<svg class="a" style="left:1529px;top:147px;" width="21" height="21" viewBox="0 0 14 14"><path d="M7 0.4L13.4 3.7V10.6L7 13.9L0.6 10.6V3.7Z" fill="#7ed6fa"/><path d="M7 0.4L13.4 3.7L7 7L0.6 3.7Z" fill="#b4e8fc"/><path d="M0.6 3.7L7 7L13.4 3.7M7 7V13.9" fill="none" stroke="#2f5f7a" stroke-width="0.7"/></svg>
<svg class="a" style="left:1548.5px;top:169.0px;" width="7" height="4" viewBox="0 0 7 4"><path d="M0 0H7L3.5 4Z" fill="#c4c4c4"/></svg>
<div class="a" style="left:1569px;top:149px;width:14px;height:14px;background:#242424;border:1px solid #1e1e1e;border-radius:2px"></div>
<svg class="a" style="left:1571px;top:151px;" width="10" height="10" viewBox="0 0 10 10"><path d="M1.5 5.2L4 7.7L8.7 2.3" fill="none" stroke="#e6e6e6" stroke-width="1.6"/></svg>
<div class="a" style="left:1589px;top:147.5px;width:322px;height:16.5px;background:#2a2a2a;border:1px solid #212121;border-radius:3px"></div>
<div class="t" style="left:1592px;top:148px;color:#8a8a8a">arrowPrefab</div>
<div class="a" style="left:1915px;top:149px;width:14px;height:14px;background:#242424;border:1px solid #1e1e1e;border-radius:2px"></div>
<div class="t" style="left:1934px;top:148px;color:#c4c4c4">Static</div>
<svg class="a" style="left:1978.0px;top:153.5px;" width="8" height="5" viewBox="0 0 8 5"><path d="M0 0H8L4.0 5Z" fill="#c4c4c4"/></svg>
<div class="t" style="left:1562px;top:172.5px;color:#c4c4c4">Tag</div>
<div class="a" style="left:1589px;top:172px;width:179.5px;height:16.5px;background:#515151;border:1px solid #303030;border-top-color:#4a4a4a;border-radius:3px"></div>
<div class="t" style="left:1593px;top:172.5px;color:#c4c4c4">Untagged</div>
<svg class="a" style="left:1755.5px;top:177.75px;" width="8" height="5" viewBox="0 0 8 5"><path d="M0 0H8L4.0 5Z" fill="#c4c4c4"/></svg>
<div class="t" style="left:1781px;top:172.5px;color:#c4c4c4">Layer</div>
<div class="a" style="left:1818px;top:172px;width:169.5px;height:16.5px;background:#515151;border:1px solid #303030;border-top-color:#4a4a4a;border-radius:3px"></div>
<div class="t" style="left:1822px;top:172.5px;color:#c4c4c4">Default</div>
<svg class="a" style="left:1974.5px;top:177.75px;" width="8" height="5" viewBox="0 0 8 5"><path d="M0 0H8L4.0 5Z" fill="#c4c4c4"/></svg>
<div class="a" style="left:1522px;top:202px;width:470px;height:20px;background:#3e3e3e;"></div>
<div class="a" style="left:1522px;top:202px;width:470px;height:1px;background:#454545;"></div>
<svg class="a" style="left:1527.5px;top:209.0px;" width="9" height="7" viewBox="0 0 9 7"><path d="M0 0H9L4.5 7Z" fill="#7a7a7a"/></svg>
<svg class="a" style="left:1543px;top:205px;" width="15" height="14" viewBox="0 0 15 14"><path d="M7.5 7.5V1" stroke="#8bd14a" stroke-width="2"/><path d="M7.5 7.5L1.5 11" stroke="#3ca8e0" stroke-width="2"/><path d="M7.5 7.5L13.5 11" stroke="#e8623a" stroke-width="2"/></svg>
<div class="t" style="left:1582px;top:205px;color:#d2d2d2;font-weight:bold">Transform</div>
<svg class="a" style="left:1933.5px;top:206.5px;" width="11" height="11" viewBox="0 0 11 11"><circle cx="5.5" cy="5.5" r="5.3" fill="#c4c4c4"/><path d="M3.7 4.2A1.8 1.8 0 1 1 6.2 5.8C5.6 6.1 5.5 6.4 5.5 7" fill="none" stroke="#383838" stroke-width="1.5"/><circle cx="5.5" cy="8.6" r="0.9" fill="#383838"/></svg>
<svg class="a" style="left:1953px;top:206px;" width="12" height="12" viewBox="0 0 12 12"><path d="M0 3.5H12M0 8.5H12" stroke="#c4c4c4" stroke-width="1.4"/><path d="M8 0.5V6.5M4 5.5V11.5" stroke="#c4c4c4" stroke-width="1.8"/></svg>
<svg class="a" style="left:1978px;top:207.2px;" width="2" height="9.6" viewBox="0 0 2 9.6"><rect x="0" y="0" width="2" height="2" fill="#c4c4c4"/><rect x="0" y="3.8" width="2" height="2" fill="#c4c4c4"/><rect x="0" y="7.6" width="2" height="2" fill="#c4c4c4"/></svg>
<div class="t" style="left:1541.3px;top:228.5px;color:#c4c4c4">Position</div>
<div class="t" style="left:1714.5px;top:228.5px;color:#c4c4c4">X</div>
<div class="a" style="left:1728.5px;top:228.0px;width:73px;height:17px;background:#2a2a2a;border:1px solid #212121;border-radius:3px"></div>
<div class="t" style="left:1732.0px;top:229.0px;color:#c4c4c4">0</div>
<div class="t" style="left:1807.4px;top:228.5px;color:#c4c4c4">Y</div>
<div class="a" style="left:1821.4px;top:228.0px;width:73px;height:17px;background:#2a2a2a;border:1px solid #212121;border-radius:3px"></div>
<div class="t" style="left:1824.9px;top:229.0px;color:#c4c4c4">3.2</div>
<div class="t" style="left:1900px;top:228.5px;color:#c4c4c4">Z</div>
<div class="a" style="left:1914px;top:228.0px;width:73px;height:17px;background:#2a2a2a;border:1px solid #212121;border-radius:3px"></div>
<div class="t" style="left:1917.5px;top:229.0px;color:#c4c4c4">0</div>
<div class="t" style="left:1541.3px;top:248.5px;color:#c4c4c4">Rotation</div>
<div class="t" style="left:1714.5px;top:248.5px;color:#c4c4c4">X</div>
<div class="a" style="left:1728.5px;top:248.0px;width:73px;height:17px;background:#2a2a2a;border:1px solid #212121;border-radius:3px"></div>
<div class="t" style="left:1732.0px;top:249.0px;color:#c4c4c4">0</div>
<div class="t" style="left:1807.4px;top:248.5px;color:#c4c4c4">Y</div>
<div class="a" style="left:1821.4px;top:248.0px;width:73px;height:17px;background:#2a2a2a;border:1px solid #212121;border-radius:3px"></div>
<div class="t" style="left:1824.9px;top:249.0px;color:#c4c4c4">0</div>
<div class="t" style="left:1900px;top:248.5px;color:#c4c4c4">Z</div>
<div class="a" style="left:1914px;top:248.0px;width:73px;height:17px;background:#2a2a2a;border:1px solid #212121;border-radius:3px"></div>
<div class="t" style="left:1917.5px;top:249.0px;color:#c4c4c4">0</div>
<div class="t" style="left:1541.3px;top:268.5px;color:#c4c4c4">Scale</div>
<div class="t" style="left:1714.5px;top:268.5px;color:#c4c4c4">X</div>
<div class="a" style="left:1728.5px;top:268.0px;width:73px;height:17px;background:#2a2a2a;border:1px solid #212121;border-radius:3px"></div>
<div class="t" style="left:1732.0px;top:269.0px;color:#c4c4c4">1</div>
<div class="t" style="left:1807.4px;top:268.5px;color:#c4c4c4">Y</div>
<div class="a" style="left:1821.4px;top:268.0px;width:73px;height:17px;background:#2a2a2a;border:1px solid #212121;border-radius:3px"></div>
<div class="t" style="left:1824.9px;top:269.0px;color:#c4c4c4">1</div>
<div class="t" style="left:1900px;top:268.5px;color:#c4c4c4">Z</div>
<div class="a" style="left:1914px;top:268.0px;width:73px;height:17px;background:#2a2a2a;border:1px solid #212121;border-radius:3px"></div>
<div class="t" style="left:1917.5px;top:269.0px;color:#c4c4c4">1</div>
<svg class="a" style="left:1691.5px;top:271.5px;" width="13" height="10" viewBox="0 0 13 10"><path d="M4.5 1.5H3A2.5 3.5 0 0 0 3 8.5H4.5M8.5 1.5H10A2.5 3.5 0 0 1 10 8.5H8.5M4.5 5H8.5" fill="none" stroke="#bdbdbd" stroke-width="1.1"/><path d="M1 9.5L12 0.5" stroke="#bdbdbd" stroke-width="1.1"/></svg>
<div class="a" style="left:1522px;top:294px;width:470px;height:1px;background:#1b1b1b;"></div>
<div class="a" style="left:1522px;top:295px;width:470px;height:20px;background:#3e3e3e;"></div>
<div class="a" style="left:1522px;top:295px;width:470px;height:1px;background:#454545;"></div>
<svg class="a" style="left:1527.5px;top:302.0px;" width="9" height="7" viewBox="0 0 9 7"><path d="M0 0H9L4.5 7Z" fill="#7a7a7a"/></svg>
<svg class="a" style="left:1543px;top:298px;" width="15" height="15" viewBox="0 0 15 15"><rect x="1.5" y="1.5" width="12" height="12" fill="none" stroke="#9a7fd8" stroke-width="1.1"/><rect x="0" y="0" width="3" height="3" fill="#9a7fd8"/><rect x="12" y="0" width="3" height="3" fill="#9a7fd8"/><rect x="0" y="12" width="3" height="3" fill="#9a7fd8"/><circle cx="8" cy="7" r="3" fill="#c4c4c4"/><path d="M4 12Q9 7 14 12Q9 16 4 12Z" fill="#c4c4c4"/><circle cx="9" cy="12" r="1.6" fill="#383838"/></svg>
<div class="a" style="left:1562px;top:298.5px;width:14px;height:14px;background:#242424;border:1px solid #1e1e1e;border-radius:2px"></div>
<svg class="a" style="left:1564px;top:300.5px;" width="10" height="10" viewBox="0 0 10 10"><path d="M1.5 5.2L4 7.7L8.7 2.3" fill="none" stroke="#e6e6e6" stroke-width="1.6"/></svg>
<div class="t" style="left:1582px;top:298px;color:#d2d2d2;font-weight:bold">Sprite Renderer</div>
<svg class="a" style="left:1933.5px;top:299.5px;" width="11" height="11" viewBox="0 0 11 11"><circle cx="5.5" cy="5.5" r="5.3" fill="#c4c4c4"/><path d="M3.7 4.2A1.8 1.8 0 1 1 6.2 5.8C5.6 6.1 5.5 6.4 5.5 7" fill="none" stroke="#383838" stroke-width="1.5"/><circle cx="5.5" cy="8.6" r="0.9" fill="#383838"/></svg>
<svg class="a" style="left:1953px;top:299px;" width="12" height="12" viewBox="0 0 12 12"><path d="M0 3.5H12M0 8.5H12" stroke="#c4c4c4" stroke-width="1.4"/><path d="M8 0.5V6.5M4 5.5V11.5" stroke="#c4c4c4" stroke-width="1.8"/></svg>
<svg class="a" style="left:1978px;top:300.2px;" width="2" height="9.6" viewBox="0 0 2 9.6"><rect x="0" y="0" width="2" height="2" fill="#c4c4c4"/><rect x="0" y="3.8" width="2" height="2" fill="#c4c4c4"/><rect x="0" y="7.6" width="2" height="2" fill="#c4c4c4"/></svg>
<div class="t" style="left:1541.3px;top:322px;color:#c4c4c4">Sprite</div>
<div class="a" style="left:1713.5px;top:321px;width:273.5px;height:17px;background:#2a2a2a;border:1px solid #212121;border-radius:3px"></div>
<div class="a" style="left:1968.5px;top:322px;width:1px;height:15px;background:#232323;"></div>
<svg class="a" style="left:1972.5px;top:324px;" width="11" height="11" viewBox="0 0 11 11"><circle cx="5.5" cy="5.5" r="4.6" fill="none" stroke="#bdbdbd" stroke-width="1.1"/><circle cx="5.5" cy="5.5" r="1.7" fill="#bdbdbd"/></svg>
<svg class="a" style="left:1717px;top:324.5px;" width="10" height="10" viewBox="0 0 10 10"><rect x="0.5" y="0.5" width="9" height="9" fill="none" stroke="#9a7fd8" stroke-width="1" stroke-dasharray="2 1.5"/><rect x="3" y="3" width="4" height="4" fill="#d0d0d0"/></svg>
<div class="t" style="left:1729px;top:321.5px;color:#c4c4c4">arrow</div>
<div class="t" style="left:1541.3px;top:342px;color:#c4c4c4">Color</div>
<div class="a" style="left:1713.5px;top:341px;width:254.5px;height:16px;background:#ffffff;"></div>
<div class="a" style="left:1968px;top:341px;width:19px;height:16px;background:#2a2a2a;border-radius:0 3px 3px 0"></div>
<svg class="a" style="left:1972.5px;top:342.5px;" width="12" height="12" viewBox="0 0 12 12"><path d="M1 11L7 5" stroke="#c4c4c4" stroke-width="1.3"/><path d="M6 3L9 0.8A1.5 1.5 0 0 1 11.2 3L9 6Z" fill="#c4c4c4"/><path d="M5.5 4L8 6.5" stroke="#c4c4c4" stroke-width="1.6"/></svg>
<div class="t" style="left:1541.3px;top:362px;color:#c4c4c4">Flip</div>
<div class="a" style="left:1713px;top:362.5px;width:14px;height:14px;background:#242424;border:1px solid #1e1e1e;border-radius:2px"></div>
<div class="t" style="left:1730.5px;top:362px;color:#c4c4c4">X</div>
<div class="a" style="left:1743px;top:362.5px;width:14px;height:14px;background:#242424;border:1px solid #1e1e1e;border-radius:2px"></div>
<div class="t" style="left:1760.5px;top:362px;color:#c4c4c4">Y</div>
<div class="t" style="left:1541.3px;top:382px;color:#c4c4c4">Draw Mode</div>
<div class="a" style="left:1713px;top:381.5px;width:273.5px;height:16.5px;background:#515151;border:1px solid #303030;border-top-color:#4a4a4a;border-radius:3px"></div>
<div class="t" style="left:1717px;top:382.0px;color:#c4c4c4">Simple</div>
<svg class="a" style="left:1973.5px;top:387.25px;" width="8" height="5" viewBox="0 0 8 5"><path d="M0 0H8L4.0 5Z" fill="#c4c4c4"/></svg>
<div class="t" style="left:1541.3px;top:402px;color:#c4c4c4">Mask Interaction</div>
<div class="a" style="left:1713px;top:401.5px;width:273.5px;height:16.5px;background:#515151;border:1px solid #303030;border-top-color:#4a4a4a;border-radius:3px"></div>
<div class="t" style="left:1717px;top:402.0px;color:#c4c4c4">None</div>
<svg class="a" style="left:1973.5px;top:407.25px;" width="8" height="5" viewBox="0 0 8 5"><path d="M0 0H8L4.0 5Z" fill="#c4c4c4"/></svg>
<div class="t" style="left:1541.3px;top:422px;color:#c4c4c4">Sprite Sort Point</div>
<div class="a" style="left:1713px;top:421.5px;width:273.5px;height:16.5px;background:#515151;border:1px solid #303030;border-top-color:#4a4a4a;border-radius:3px"></div>
<div class="t" style="left:1717px;top:422.0px;color:#c4c4c4">Center</div>
<svg class="a" style="left:1973.5px;top:427.25px;" width="8" height="5" viewBox="0 0 8 5"><path d="M0 0H8L4.0 5Z" fill="#c4c4c4"/></svg>
<div class="t" style="left:1541.3px;top:442px;color:#c4c4c4">Material</div>
<div class="a" style="left:1713.5px;top:441px;width:273.5px;height:17px;background:#2a2a2a;border:1px solid #212121;border-radius:3px"></div>
<div class="a" style="left:1968.5px;top:442px;width:1px;height:15px;background:#232323;"></div>
<svg class="a" style="left:1972.5px;top:444px;" width="11" height="11" viewBox="0 0 11 11"><circle cx="5.5" cy="5.5" r="4.6" fill="none" stroke="#bdbdbd" stroke-width="1.1"/><circle cx="5.5" cy="5.5" r="1.7" fill="#bdbdbd"/></svg>
<svg class="a" style="left:1716.5px;top:444px;" width="11" height="11" viewBox="0 0 11 11"><circle cx="5.5" cy="5.5" r="5" fill="#3a9ad8"/><circle cx="6.5" cy="4.5" r="3.5" fill="#a8e0f8"/></svg>
<div class="t" style="left:1729px;top:441.5px;color:#c4c4c4">Sprites-Default</div>
<svg class="a" style="left:1527.5px;top:466.0px;" width="9" height="7" viewBox="0 0 9 7"><path d="M0 0H9L4.5 7Z" fill="#7a7a7a"/></svg>
<div class="t" style="left:1542px;top:462px;color:#d2d2d2;font-weight:bold">Additional Settings</div>
<div class="t" style="left:1556px;top:482px;color:#c4c4c4">Sorting Layer</div>
<div class="a" style="left:1713px;top:481px;width:273.5px;height:16.5px;background:#515151;border:1px solid #303030;border-top-color:#4a4a4a;border-radius:3px"></div>
<div class="t" style="left:1717px;top:481.5px;color:#c4c4c4">Default</div>
<svg class="a" style="left:1973.5px;top:486.75px;" width="8" height="5" viewBox="0 0 8 5"><path d="M0 0H8L4.0 5Z" fill="#c4c4c4"/></svg>
<div class="t" style="left:1556px;top:502px;color:#c4c4c4">Order in Layer</div>
<div class="a" style="left:1713.5px;top:500.5px;width:273.5px;height:17px;background:#2a2a2a;border:1px solid #212121;border-radius:3px"></div>
<div class="t" style="left:1717.5px;top:502px;color:#c4c4c4">1</div>
<div class="a" style="left:1522px;top:527px;width:470px;height:1px;background:#1b1b1b;"></div>
<div class="a" style="left:1522px;top:528px;width:470px;height:20px;background:#3e3e3e;"></div>
<div class="a" style="left:1522px;top:528px;width:470px;height:1px;background:#454545;"></div>
<svg class="a" style="left:1527.5px;top:535.0px;" width="9" height="7" viewBox="0 0 9 7"><path d="M0 0H9L4.5 7Z" fill="#7a7a7a"/></svg>
<svg class="a" style="left:1544px;top:531px;" width="12" height="14" viewBox="0 0 12 14"><path d="M0.5 0.5H8.5L11.5 3.5V13.5H0.5Z" fill="#f0f0f0"/><path d="M4 4V11M7.5 4V11M2.5 5.8H9.5M2.5 9H9.5" stroke="#1f8a3a" stroke-width="1.1"/></svg>
<div class="a" style="left:1562px;top:531.5px;width:14px;height:14px;background:#242424;border:1px solid #1e1e1e;border-radius:2px"></div>
<svg class="a" style="left:1564px;top:533.5px;" width="10" height="10" viewBox="0 0 10 10"><path d="M1.5 5.2L4 7.7L8.7 2.3" fill="none" stroke="#e6e6e6" stroke-width="1.6"/></svg>
<div class="t" style="left:1582px;top:531px;color:#d2d2d2;font-weight:bold">Arrow Controller (Script)</div>
<svg class="a" style="left:1933.5px;top:532.5px;" width="11" height="11" viewBox="0 0 11 11"><circle cx="5.5" cy="5.5" r="5.3" fill="#c4c4c4"/><path d="M3.7 4.2A1.8 1.8 0 1 1 6.2 5.8C5.6 6.1 5.5 6.4 5.5 7" fill="none" stroke="#383838" stroke-width="1.5"/><circle cx="5.5" cy="8.6" r="0.9" fill="#383838"/></svg>
<svg class="a" style="left:1953px;top:532px;" width="12" height="12" viewBox="0 0 12 12"><path d="M0 3.5H12M0 8.5H12" stroke="#c4c4c4" stroke-width="1.4"/><path d="M8 0.5V6.5M4 5.5V11.5" stroke="#c4c4c4" stroke-width="1.8"/></svg>
<svg class="a" style="left:1978px;top:533.2px;" width="2" height="9.6" viewBox="0 0 2 9.6"><rect x="0" y="0" width="2" height="2" fill="#c4c4c4"/><rect x="0" y="3.8" width="2" height="2" fill="#c4c4c4"/><rect x="0" y="7.6" width="2" height="2" fill="#c4c4c4"/></svg>
<div class="t" style="left:1541.3px;top:554px;color:#8a8a8a">Script</div>
<div class="a" style="left:1713.5px;top:552.5px;width:273.5px;height:17px;background:#2a2a2a;border:1px solid #212121;border-radius:3px"></div>
<div class="a" style="left:1968.5px;top:553.5px;width:1px;height:15px;background:#232323;"></div>
<svg class="a" style="left:1972.5px;top:555.5px;" width="11" height="11" viewBox="0 0 11 11"><circle cx="5.5" cy="5.5" r="4.6" fill="none" stroke="#7e7e7e" stroke-width="1.1"/><circle cx="5.5" cy="5.5" r="1.7" fill="#7e7e7e"/></svg>
<svg class="a" style="left:1718px;top:555.0px;" width="10" height="12" viewBox="0 0 10 12"><path d="M0.5 0.5H7L9.5 3V11.5H0.5Z" fill="#8a8a8a"/><path d="M3 4V10M6 4V10M2 5.5H8M2 8.5H8" stroke="#4a6a4a" stroke-width="0.9"/></svg>
<div class="t" style="left:1729px;top:553.0px;color:#8a8a8a">ArrowController</div>
<div class="a" style="left:1522px;top:577px;width:470px;height:1px;background:#1b1b1b;"></div>
<div class="a" style="left:1522px;top:578px;width:470px;height:58px;background:#3c3c3c;"></div>
<div class="a" style="left:1522px;top:578px;width:470px;height:1px;background:#434343;"></div>
<div class="a" style="left:1522px;top:636px;width:470px;height:1px;background:#1b1b1b;"></div>
<div class="a" style="left:1522px;top:637px;width:470px;height:10px;background:#383838;"></div>
<div class="a" style="left:1522px;top:647px;width:470px;height:1px;background:#1b1b1b;"></div>
<div class="a" style="left:1542px;top:588px;width:24.5px;height:24.5px;background:#ffffff;"></div>
<div class="t" style="left:1578.3px;top:583px;color:#c4c4c4;font-size:14.2px;line-height:18px;height:18px">Sprites-Default (Material)</div>
<svg class="a" style="left:1962.5px;top:585.5px;" width="11" height="11" viewBox="0 0 11 11"><circle cx="5.5" cy="5.5" r="5.3" fill="#c4c4c4"/><path d="M3.7 4.2A1.8 1.8 0 1 1 6.2 5.8C5.6 6.1 5.5 6.4 5.5 7" fill="none" stroke="#383838" stroke-width="1.5"/><circle cx="5.5" cy="8.6" r="0.9" fill="#383838"/></svg>
<svg class="a" style="left:1983px;top:586.2px;" width="2" height="9.6" viewBox="0 0 2 9.6"><rect x="0" y="0" width="2" height="2" fill="#c4c4c4"/><rect x="0" y="3.8" width="2" height="2" fill="#c4c4c4"/><rect x="0" y="7.6" width="2" height="2" fill="#c4c4c4"/></svg>
<svg class="a" style="left:1529.0px;top:616.5px;" width="6" height="9" viewBox="0 0 6 9"><path d="M0 0V9L6 4.5Z" fill="#7a7a7a"/></svg>
<div class="t" style="left:1575.2px;top:608px;color:#8a8a8a">Shader</div>
<div class="a" style="left:1626.6px;top:607px;width:266.6px;height:16.5px;background:#454545;border:1px solid #2e2e2e;border-radius:3px"></div>
<div class="t" style="left:1630.5px;top:608px;color:#8a8a8a">Sprites/Default</div>
<svg class="a" style="left:1880.0px;top:612.5px;" width="8" height="5" viewBox="0 0 8 5"><path d="M0 0H8L4.0 5Z" fill="#7a7a7a"/></svg>
<div class="a" style="left:1898px;top:607px;width:42px;height:16.5px;background:#585858;border:1px solid #303030;border-radius:3px"></div>
<div class="t" style="left:1903px;top:608px;color:#e0e0e0">Edit...</div>
<div class="a" style="left:1944.5px;top:607px;width:42.5px;height:16.5px;background:#585858;border:1px solid #303030;border-radius:3px"></div>
<svg class="a" style="left:1953px;top:610.5px;" width="13" height="10" viewBox="0 0 13 10"><path d="M4 1.5H11M4 5H11M4 8.5H11" stroke="#d8d8d8" stroke-width="1.1"/><circle cx="1.9" cy="5" r="0.85" fill="#d8d8d8"/><circle cx="1.9" cy="8.5" r="0.85" fill="#d8d8d8"/><path d="M0.4 1.5H3.4M1.9 0V3" stroke="#d8d8d8" stroke-width="0.9"/></svg>
<svg class="a" style="left:1974.0px;top:613.0px;" width="8" height="5" viewBox="0 0 8 5"><path d="M0 0H8L4.0 5Z" fill="#c4c4c4"/></svg>
<div class="a" style="left:1642.7px;top:656.8px;width:228.2px;height:22.2px;background:#585858;border:1px solid #303030;border-top-color:#5e5e5e;border-radius:3px"></div>
<div class="t" style="left:1712.3px;top:660.5px;color:#e0e0e0">Add Component</div>
<div class="a" style="left:1522px;top:1110px;width:470px;height:1px;background:#1b1b1b;"></div>
<div class="a" style="left:1522px;top:1111px;width:470px;height:20px;background:#3c3c3c;"></div>
<div class="a" style="left:1522px;top:1111px;width:470px;height:1px;background:#444444;"></div>
<div class="a" style="left:1522px;top:1131px;width:470px;height:1px;background:#1b1b1b;"></div>
<div class="t" style="left:1529px;top:1114px;color:#d2d2d2;font-size:13.4px">arrowPrefab</div>
<div class="a" style="left:1607.7px;top:1120px;width:365px;height:1px;background:#5e5e5e;"></div>
<div class="a" style="left:1607.7px;top:1123px;width:365px;height:1px;background:#5e5e5e;"></div>
<div class="a" style="left:1975px;top:1111.5px;width:1px;height:20px;background:#2a2a2a;"></div>
<svg class="a" style="left:1982.8px;top:1116.7px;" width="2" height="9.6" viewBox="0 0 2 9.6"><rect x="0" y="0" width="2" height="2" fill="#c4c4c4"/><rect x="0" y="3.8" width="2" height="2" fill="#c4c4c4"/><rect x="0" y="7.6" width="2" height="2" fill="#c4c4c4"/></svg>
<div class="a" style="left:1522px;top:1132px;width:470px;height:110px;background:#303030;"></div>
<div class="a" style="left:1522px;top:1242px;width:470px;height:1px;background:#1b1b1b;"></div>
<div class="a" style="left:1522px;top:1243px;width:470px;height:21px;background:#3b3b3b;"></div>
<svg class="a" style="left:1733.5px;top:1147.1px" width="48.10" height="80.10" viewBox="0 0 48.10 80.10"><path d="M15.23,0.00 L34.27,0.59 L34.87,49.43 L48.10,50.40 L25.45,80.10 L0.00,48.45 L16.03,48.45Z" fill="#000" stroke="#000" stroke-width="0.8" stroke-linejoin="round"/><path d="M19.50,4.33 L30.12,4.66 L30.72,53.33 L40.06,54.02 L25.37,73.29 L8.77,52.65 L20.30,52.65Z" fill="#fff"/></svg>
<div class="a" style="left:1968px;top:1248px;width:20px;height:14px;background:#2c5387;border-radius:7px"></div>
<svg class="a" style="left:1972px;top:1250px;" width="12" height="10" viewBox="0 0 12 10"><path d="M1 1H6L11 6L7 10L1 4Z" fill="#e8e8e8"/><circle cx="3.5" cy="3" r="1" fill="#2c5387"/></svg>
<svg class="a" style="left:7px;top:1005px;" width="13" height="11" viewBox="0 0 13 11"><path d="M0 0.5H5L6.5 2H13V11H0Z" fill="#c4c4c4"/></svg>
<div class="t" style="left:23px;top:1002px;color:#c4c4c4">Project</div>
<svg class="a" style="left:90px;top:1003.5px;" width="10" height="12" viewBox="0 0 10 12"><rect x="0" y="0" width="10" height="12" rx="1" fill="#c4c4c4"/><path d="M2 3H8M2 5.5H8M2 8H6" stroke="#282828" stroke-width="1"/></svg>
<div class="t" style="left:105.5px;top:1002px;color:#c4c4c4">Console</div>
<svg class="a" style="left:1485.5px;top:1003.5px;" width="9" height="11" viewBox="0 0 9 11"><path d="M1.6 3.6A2.75 2.75 0 0 1 7.1 3.3V6.3" fill="none" stroke="#c4c4c4" stroke-width="1"/><rect x="0.6" y="6.2" width="7.4" height="4.2" rx="0.8" fill="none" stroke="#c4c4c4" stroke-width="1"/></svg>
<svg class="a" style="left:1506px;top:1004.2px;" width="2" height="9.6" viewBox="0 0 2 9.6"><rect x="0" y="0" width="2" height="2" fill="#c4c4c4"/><rect x="0" y="3.8" width="2" height="2" fill="#c4c4c4"/><rect x="0" y="7.6" width="2" height="2" fill="#c4c4c4"/></svg>
<svg class="a" style="left:6.5px;top:1023px;" width="13" height="13" viewBox="0 0 13 13"><path d="M6.5 0.5V12.5M0.5 6.5H12.5" stroke="#d8d8d8" stroke-width="1.6"/></svg>
<svg class="a" style="left:23.0px;top:1026.5px;" width="8" height="5" viewBox="0 0 8 5"><path d="M0 0H8L4.0 5Z" fill="#c4c4c4"/></svg>
<div class="a" style="left:1055px;top:1021.5px;width:318px;height:15.5px;background:#2a2a2a;border:1px solid #232323;border-radius:4px"></div>
<svg class="a" style="left:1060px;top:1025px;" width="8" height="8" viewBox="0 0 8 8"><circle cx="3" cy="3" r="2.3" fill="none" stroke="#c4c4c4" stroke-width="1.1"/><path d="M4.6 4.6L7.5 7.5" stroke="#c4c4c4" stroke-width="1.3"/></svg>
<div class="a" style="left:1355px;top:1022px;width:1px;height:14.5px;background:#232323;"></div>
<svg class="a" style="left:1358.5px;top:1023px;" width="12" height="11" viewBox="0 0 12 11"><rect x="0.6" y="0.6" width="10.8" height="9.8" fill="none" stroke="#c4c4c4" stroke-width="1.1"/><path d="M3.5 7.5L8.5 2.5M5 2.5H8.5V6" fill="none" stroke="#c4c4c4" stroke-width="1.1"/><rect x="0.6" y="6.6" width="4" height="4" fill="#2a2a2a" stroke="#c4c4c4" stroke-width="1.1"/></svg>
<div class="a" style="left:1377px;top:1019px;width:1px;height:20px;background:#2b2b2b;"></div>
<div class="a" style="left:1402.6px;top:1019px;width:1px;height:20px;background:#2b2b2b;"></div>
<div class="a" style="left:1428.7px;top:1019px;width:1px;height:20px;background:#2b2b2b;"></div>
<div class="a" style="left:1454.6px;top:1019px;width:1px;height:20px;background:#2b2b2b;"></div>
<div class="a" style="left:1481px;top:1019px;width:1px;height:20px;background:#2b2b2b;"></div>
<svg class="a" style="left:1382.5px;top:1023px;" width="14" height="13" viewBox="0 0 14 13"><rect x="0.5" y="0" width="6" height="5" fill="#c4c4c4"/><circle cx="4" cy="9" r="3.7" fill="#c4c4c4"/><path d="M9.5 3L13.5 9.5H5.5Z" fill="#c4c4c4"/></svg>
<svg class="a" style="left:1408px;top:1023px;" width="13" height="13" viewBox="0 0 13 13"><path d="M6 0.5H12.5V7L6.5 13L0 6.5Z" fill="#c4c4c4"/><circle cx="9.5" cy="3.5" r="1.2" fill="#3c3c3c"/></svg>
<svg class="a" style="left:1433.5px;top:1022.5px;" width="14" height="14" viewBox="0 0 14 14"><circle cx="7" cy="7" r="6.8" fill="#c4c4c4"/><rect x="6" y="3" width="2" height="5.5" fill="#3c3c3c"/><rect x="6" y="9.5" width="2" height="2" fill="#3c3c3c"/></svg>
<svg class="a" style="left:1460px;top:1023px;" width="13" height="12" viewBox="0 0 13 12"><path d="M6.5 0L8.3 4.2L12.8 4.5L9.3 7.3L10.5 11.8L6.5 9.3L2.5 11.8L3.7 7.3L0.2 4.5L4.7 4.2Z" fill="#9a9a9a"/></svg>
<svg class="a" style="left:1485px;top:1023px;" width="15" height="12" viewBox="0 0 15 12"><path d="M1 6Q7.5 0 14 6Q7.5 12 1 6Z" fill="none" stroke="#c4c4c4" stroke-width="1.2"/><path d="M2.5 11.5L12.5 0.5" stroke="#c4c4c4" stroke-width="1.3"/></svg>
<div class="t" style="left:1500.5px;top:1021.5px;color:#c4c4c4">21</div>
<svg class="a" style="left:4.5px;top:1044.5px;" width="9" height="7" viewBox="0 0 9 7"><path d="M0 0H9L4.5 7Z" fill="#7a7a7a"/></svg>
<svg class="a" style="left:18px;top:1042px;" width="12" height="12" viewBox="0 0 12 12"><path d="M6 0L7.7 4L12 4.3L8.7 7L9.8 11.5L6 9L2.2 11.5L3.3 7L0 4.3L4.3 4Z" fill="#c4c4c4"/></svg>
<div class="t" style="left:35.3px;top:1040px;color:#d2d2d2;font-weight:bold">Favorites</div>
<svg class="a" style="left:32px;top:1058px;" width="12" height="12" viewBox="0 0 12 12"><circle cx="4.8" cy="4.8" r="3.8" fill="none" stroke="#c4c4c4" stroke-width="1.2"/><path d="M7.5 7.5L11 11" stroke="#c4c4c4" stroke-width="1.6"/></svg>
<div class="t" style="left:48px;top:1056px;color:#c4c4c4">All Materials</div>
<svg class="a" style="left:32px;top:1074px;" width="12" height="12" viewBox="0 0 12 12"><circle cx="4.8" cy="4.8" r="3.8" fill="none" stroke="#c4c4c4" stroke-width="1.2"/><path d="M7.5 7.5L11 11" stroke="#c4c4c4" stroke-width="1.6"/></svg>
<div class="t" style="left:48px;top:1072px;color:#c4c4c4">All Models</div>
<svg class="a" style="left:32px;top:1090px;" width="12" height="12" viewBox="0 0 12 12"><circle cx="4.8" cy="4.8" r="3.8" fill="none" stroke="#c4c4c4" stroke-width="1.2"/><path d="M7.5 7.5L11 11" stroke="#c4c4c4" stroke-width="1.6"/></svg>
<div class="t" style="left:48px;top:1088px;color:#c4c4c4">All Prefabs</div>
<svg class="a" style="left:4.5px;top:1123.5px;" width="9" height="7" viewBox="0 0 9 7"><path d="M0 0H9L4.5 7Z" fill="#7a7a7a"/></svg>
<svg class="a" style="left:18px;top:1121px;" width="14" height="12" viewBox="0 0 14 12"><path d="M0.6 1H5L6.5 2.5H12V4.5" fill="none" stroke="#c4c4c4" stroke-width="1.2"/><path d="M0.6 1V11H11.5L13.5 5H2.5L0.6 11" fill="none" stroke="#c4c4c4" stroke-width="1.2" stroke-linejoin="round"/></svg>
<div class="t" style="left:35.3px;top:1118.5px;color:#d2d2d2;font-weight:bold">Assets</div>
<div class="a" style="left:0px;top:1135.3px;width:194px;height:15.6px;background:#4a4a4a;"></div>
<svg class="a" style="left:32px;top:1137.5px;" width="13" height="11" viewBox="0 0 13 11"><path d="M0 0.5H5L6.5 2H13V11H0Z" fill="#c4c4c4"/></svg>
<div class="t" style="left:48px;top:1135px;color:#c4c4c4">resource</div>
<svg class="a" style="left:32px;top:1153.5px;" width="13" height="11" viewBox="0 0 13 11"><path d="M0 0.5H5L6.5 2H13V11H0Z" fill="#c4c4c4"/></svg>
<div class="t" style="left:48px;top:1151px;color:#c4c4c4">Scenes</div>
<svg class="a" style="left:4.5px;top:1171.5px;" width="9" height="7" viewBox="0 0 9 7"><path d="M0 0H9L4.5 7Z" fill="#7a7a7a"/></svg>
<svg class="a" style="left:18px;top:1169px;" width="14" height="12" viewBox="0 0 14 12"><path d="M0.6 1H5L6.5 2.5H12V4.5" fill="none" stroke="#c4c4c4" stroke-width="1.2"/><path d="M0.6 1V11H11.5L13.5 5H2.5L0.6 11" fill="none" stroke="#c4c4c4" stroke-width="1.2" stroke-linejoin="round"/></svg>
<div class="t" style="left:35.3px;top:1167px;color:#d2d2d2;font-weight:bold">Packages</div>
<svg class="a" style="left:19.5px;top:1186.5px;" width="6" height="9" viewBox="0 0 6 9"><path d="M0 0V9L6 4.5Z" fill="#7a7a7a"/></svg>
<svg class="a" style="left:32px;top:1185.5px;" width="13" height="11" viewBox="0 0 13 11"><path d="M0 0.5H5L6.5 2H13V11H0Z" fill="#c4c4c4"/></svg>
<div class="t" style="left:48px;top:1183px;color:#c4c4c4">2D Animation</div>
<svg class="a" style="left:19.5px;top:1202.5px;" width="6" height="9" viewBox="0 0 6 9"><path d="M0 0V9L6 4.5Z" fill="#7a7a7a"/></svg>
<svg class="a" style="left:32px;top:1201.5px;" width="13" height="11" viewBox="0 0 13 11"><path d="M0 0.5H5L6.5 2H13V11H0Z" fill="#c4c4c4"/></svg>
<div class="t" style="left:48px;top:1199px;color:#c4c4c4">2D Aseprite Importer</div>
<svg class="a" style="left:19.5px;top:1218.5px;" width="6" height="9" viewBox="0 0 6 9"><path d="M0 0V9L6 4.5Z" fill="#7a7a7a"/></svg>
<svg class="a" style="left:32px;top:1217.5px;" width="13" height="11" viewBox="0 0 13 11"><path d="M0 0.5H5L6.5 2H13V11H0Z" fill="#c4c4c4"/></svg>
<div class="t" style="left:48px;top:1215px;color:#c4c4c4">2D Common</div>
<svg class="a" style="left:19.5px;top:1234.5px;" width="6" height="9" viewBox="0 0 6 9"><path d="M0 0V9L6 4.5Z" fill="#7a7a7a"/></svg>
<svg class="a" style="left:32px;top:1233.5px;" width="13" height="11" viewBox="0 0 13 11"><path d="M0 0.5H5L6.5 2H13V11H0Z" fill="#c4c4c4"/></svg>
<div class="t" style="left:48px;top:1231px;color:#c4c4c4">2D Pixel Perfect</div>
<svg class="a" style="left:19.5px;top:1250.5px;" width="6" height="9" viewBox="0 0 6 9"><path d="M0 0V9L6 4.5Z" fill="#7a7a7a"/></svg>
<svg class="a" style="left:32px;top:1249.5px;" width="13" height="11" viewBox="0 0 13 11"><path d="M0 0.5H5L6.5 2H13V11H0Z" fill="#c4c4c4"/></svg>
<div class="t" style="left:48px;top:1247px;color:#c4c4c4">2D PSD Importer</div>
<div class="a" style="left:194px;top:1040.5px;width:13px;height:224px;background:#373737;"></div>
<div class="a" style="left:194px;top:1040.5px;width:1px;height:224px;background:#303030;"></div>
<svg class="a" style="left:196px;top:1045px;" width="9" height="6" viewBox="0 0 9 6"><path d="M0 6H9L4.5 0Z" fill="#c4c4c4"/></svg>
<div class="a" style="left:196.5px;top:1056px;width:9px;height:123px;background:#5f5f5f;border-radius:5px"></div>
<div class="a" style="left:207px;top:1040.5px;width:1px;height:224px;background:#1f1f1f;"></div>
<div class="t" style="left:212px;top:1042.5px;color:#c4c4c4">Assets</div>
<svg class="a" style="left:255.5px;top:1045.5px;" width="6" height="9" viewBox="0 0 6 9"><path d="M1 0.8L5 4.5L1 8.2" fill="none" stroke="#9a9a9a" stroke-width="1.2"/></svg>
<div class="t" style="left:267px;top:1042.5px;color:#d2d2d2;font-weight:bold">resource</div>
<div class="a" style="left:233.7px;top:1072.5px;width:74.60000000000002px;height:92.5px;background:#2e2e2e;border:1px solid #2a2a2a;border-radius:2px"></div>
<svg class="a" style="left:245.2px;top:1076.9px" width="52.60" height="86.30" viewBox="0 0 52.60 86.30"><path d="M16.66,0.00 L37.48,0.63 L38.13,53.25 L52.60,54.31 L27.83,86.30 L0.00,52.20 L17.53,52.20Z" fill="#000" stroke="#000" stroke-width="0.8" stroke-linejoin="round"/><path d="M21.13,4.54 L33.13,4.90 L33.79,57.35 L44.10,58.10 L27.74,79.23 L9.27,56.60 L22.01,56.60Z" fill="#fff"/></svg>
<div class="t" style="left:211px;top:1168px;width:120px;text-align:center;font-size:11px;color:#c4c4c4;">arrow</div>
<div class="a" style="left:307.9px;top:1107.0px;width:21.6px;height:21.6px;border-radius:50%;background:#c8c8c8;box-shadow:0 1px 2px rgba(0,0,0,0.5)"></div>
<svg class="a" style="left:315.2px;top:1112.3px;" width="10" height="11" viewBox="0 0 10 11"><path d="M0 0L9.5 5.5L0 11Z" fill="#3a3a3a"/></svg>
<div class="a" style="left:332.9px;top:1072.5px;width:92.0px;height:92.5px;background:#464b55;border:1px solid #2a2a2a;border-radius:2px"></div>
<svg class="a" style="left:359px;top:1085.6px" width="40.60" height="65.70" viewBox="0 0 40.60 65.70"><path d="M12.86,0.00 L28.93,0.48 L29.43,40.54 L40.60,41.34 L21.48,65.70 L0.00,39.74 L13.53,39.74Z" fill="#000" stroke="#000" stroke-width="0.8" stroke-linejoin="round"/><path d="M16.22,3.40 L25.67,3.68 L26.17,43.62 L34.17,44.19 L21.42,60.44 L7.01,43.04 L16.89,43.04Z" fill="#dce6f7"/></svg>
<div class="a" style="left:325.2px;top:1168.2px;width:107.8px;height:13.7px;background:#2c5d87;border-radius:3px"></div>
<svg class="a" style="left:343px;top:1169px;" width="11" height="11" viewBox="0 0 14 14"><path d="M7 0.4L13.4 3.7V10.6L7 13.9L0.6 10.6V3.7Z" fill="#7ed6fa"/><path d="M7 0.4L13.4 3.7L7 7L0.6 3.7Z" fill="#b4e8fc"/><path d="M0.6 3.7L7 7L13.4 3.7M7 7V13.9" fill="none" stroke="#2f5f7a" stroke-width="0.7"/></svg>
<div class="t" style="left:357px;top:1167px;font-size:11px;color:#e8e8e8">arrowPrefab</div>
<div class="a" style="left:440.7px;top:1072.5px;width:92.4px;height:92.5px;background:linear-gradient(#b3b3b3,#e4e4e4 55%,#fdfdfd 85%,#fff)"></div>
<div class="a" style="left:440.7px;top:1160px;width:92.4px;height:5px;background:#000;"></div>
<div class="t" style="left:425.2px;top:1168px;width:120px;text-align:center;font-size:11px;color:#c4c4c4;">background</div>
<div class="a" style="left:523.8000000000001px;top:1107.0px;width:21.6px;height:21.6px;border-radius:50%;background:#c8c8c8;box-shadow:0 1px 2px rgba(0,0,0,0.5)"></div>
<svg class="a" style="left:531.1px;top:1112.3px;" width="10" height="11" viewBox="0 0 10 11"><path d="M0 0L9.5 5.5L0 11Z" fill="#3a3a3a"/></svg>
<div class="a" style="left:548.5px;top:1072.5px;width:92.5px;height:92.5px;background:#2e2e2e;border:1px solid #2a2a2a;border-radius:2px"></div>
<div class="a" style="left:552.1px;top:1075.5px;width:84.4px;height:84.4px;border-radius:50%;border:16px solid #1f5088"></div>
<div class="t" style="left:533.4px;top:1168px;width:120px;text-align:center;font-size:11px;color:#c4c4c4;">hp_gauge</div>
<div class="a" style="left:632.0px;top:1107.0px;width:21.6px;height:21.6px;border-radius:50%;background:#c8c8c8;box-shadow:0 1px 2px rgba(0,0,0,0.5)"></div>
<svg class="a" style="left:639.3px;top:1112.3px;" width="10" height="11" viewBox="0 0 10 11"><path d="M0 0L9.5 5.5L0 11Z" fill="#3a3a3a"/></svg>
<div class="a" style="left:655.1px;top:1072.5px;width:95.89999999999998px;height:92.5px;background:#2e2e2e;border:1px solid #2a2a2a;border-radius:2px"></div>
<svg class="a" style="left:658px;top:1074.3px;" width="89.2" height="89.2" viewBox="0 0 89.2 89.2"><circle cx="44.6" cy="44.6" r="43.8" fill="none" stroke="#7d52a8" stroke-width="1.8"/><path d="M15 44.6L47.7 18.4V36.5H67V53.7H47.7V71.1Z" fill="#7a4da0"/></svg>
<div class="t" style="left:641.2px;top:1168px;width:120px;text-align:center;font-size:11px;color:#c4c4c4;">LButton</div>
<div class="a" style="left:740.2px;top:1107.0px;width:21.6px;height:21.6px;border-radius:50%;background:#c8c8c8;box-shadow:0 1px 2px rgba(0,0,0,0.5)"></div>
<svg class="a" style="left:747.5px;top:1112.3px;" width="10" height="11" viewBox="0 0 10 11"><path d="M0 0L9.5 5.5L0 11Z" fill="#3a3a3a"/></svg>
<div class="a" style="left:767.5px;top:1072.5px;width:86.70000000000005px;height:92.5px;background:#2e2e2e;border:1px solid #2a2a2a;border-radius:2px"></div>
<svg class="a" style="left:760px;top:1067px" width="100.0" height="100.0" viewBox="0 0 200 200">
<defs><clipPath id="catclip3"><path d="M55,34 C56,26 57,20 60,17 L79,32 C95,26 112,25 127,29 L142,13 C147,18 150,25 151,31 C165,38 170,52 166,62 C163,68 160,70 158,70 L171,72 C180,73 186,80 183,88 C180,93 170,96 157,101 C152,104 151,112 150,125 C149,145 147,160 143,178 C141,186 133,189 127,187 C121,185 118,176 116,164 C110,165 95,165 85,164 C83,172 80,182 72,186 C66,188 59,185 57,178 C54,165 52,150 53,130 L54,103 L26,103 C20,103 18,98 21,93 C25,86 35,80 55,74 C45,71 38,66 38,58 C38,48 45,40 55,34 Z"/></clipPath></defs>
<path d="M53,104 C44,103 36,108 38,116 C40,125 46,134 53,141 Z" fill="#fff" stroke="#000" stroke-width="3.25" stroke-linejoin="round"/>
<path d="M42,113 L50,118 M43,120 L51,125 M46,127 L52,131" stroke="#999" stroke-width="2.2"/>
<path d="M55,34 C56,26 57,20 60,17 L79,32 C95,26 112,25 127,29 L142,13 C147,18 150,25 151,31 C165,38 170,52 166,62 C163,68 160,70 158,70 L171,72 C180,73 186,80 183,88 C180,93 170,96 157,101 C152,104 151,112 150,125 C149,145 147,160 143,178 C141,186 133,189 127,187 C121,185 118,176 116,164 C110,165 95,165 85,164 C83,172 80,182 72,186 C66,188 59,185 57,178 C54,165 52,150 53,130 L54,103 L26,103 C20,103 18,98 21,93 C25,86 35,80 55,74 C45,71 38,66 38,58 C38,48 45,40 55,34 Z" fill="#fff"/>
<g clip-path="url(#catclip3)" fill="#8c8c8c">
<ellipse cx="28" cy="95" rx="8.5" ry="7"/><ellipse cx="177" cy="86" rx="8" ry="9"/>
<ellipse cx="71" cy="181" rx="10" ry="5"/><ellipse cx="131" cy="182" rx="10" ry="5"/>
<path d="M58,20 L66,26 L58,36Z"/><path d="M143,16 L150,31 L141,27Z"/>
</g>
<ellipse cx="103" cy="122.6" rx="31.6" ry="34.8" fill="#e9e9e9"/>
<path d="M55,34 C56,26 57,20 60,17 L79,32 C95,26 112,25 127,29 L142,13 C147,18 150,25 151,31 C165,38 170,52 166,62 C163,68 160,70 158,70 L171,72 C180,73 186,80 183,88 C180,93 170,96 157,101 C152,104 151,112 150,125 C149,145 147,160 143,178 C141,186 133,189 127,187 C121,185 118,176 116,164 C110,165 95,165 85,164 C83,172 80,182 72,186 C66,188 59,185 57,178 C54,165 52,150 53,130 L54,103 L26,103 C20,103 18,98 21,93 C25,86 35,80 55,74 C45,71 38,66 38,58 C38,48 45,40 55,34 Z" fill="none" stroke="#000" stroke-width="5.0" stroke-linejoin="round"/>
<path d="M133,76 Q152,74 170,72" fill="none" stroke="#000" stroke-width="5.0" stroke-linecap="round"/>
<ellipse cx="78.3" cy="45.9" rx="7" ry="6.3" fill="#000"/><ellipse cx="125.8" cy="45.1" rx="7" ry="6.3" fill="#000"/>
<path d="M88,55 C87,62 93,66 98,62 L101,58 C102,63 107,65 110,62 C112,60 113,57 112,54" fill="none" stroke="#000" stroke-width="3" stroke-linecap="round"/>
<path d="M46,51.5 L60,50.5 M44,59.5 L59,58.5 M47,66 L61,64.5 M146,47 L160,46.5 M147,55.5 L161,55.5 M145,63.5 L160,62.5" stroke="#8a8a8a" stroke-width="1.8"/>
</svg>
<div class="t" style="left:750.5px;top:1168px;width:120px;text-align:center;font-size:11px;color:#c4c4c4;">player</div>
<div class="a" style="left:847.9000000000001px;top:1107.0px;width:21.6px;height:21.6px;border-radius:50%;background:#c8c8c8;box-shadow:0 1px 2px rgba(0,0,0,0.5)"></div>
<svg class="a" style="left:855.2px;top:1112.3px;" width="10" height="11" viewBox="0 0 10 11"><path d="M0 0L9.5 5.5L0 11Z" fill="#3a3a3a"/></svg>
<div class="a" style="left:870.8px;top:1072.5px;width:96.40000000000009px;height:92.5px;background:#2e2e2e;border:1px solid #2a2a2a;border-radius:2px"></div>
<svg class="a" style="left:873.4px;top:1074.3px;" width="89.2" height="89.2" viewBox="0 0 89.2 89.2"><circle cx="44.6" cy="44.6" r="43.8" fill="none" stroke="#7d52a8" stroke-width="1.8"/><path d="M76.3 44.6L43.2 18.4V36.5H23.6V53.7H43.2V71.1Z" fill="#7a4da0"/></svg>
<div class="t" style="left:857.2px;top:1168px;width:120px;text-align:center;font-size:11px;color:#c4c4c4;">RButton</div>
<div class="a" style="left:956.1px;top:1107.0px;width:21.6px;height:21.6px;border-radius:50%;background:#c8c8c8;box-shadow:0 1px 2px rgba(0,0,0,0.5)"></div>
<svg class="a" style="left:963.4px;top:1112.3px;" width="10" height="11" viewBox="0 0 10 11"><path d="M0 0L9.5 5.5L0 11Z" fill="#3a3a3a"/></svg>
<svg class="a" style="left:0;top:0" width="1992" height="1264" viewBox="0 0 1992 1264"><path d="M111.4,122 L355.2,1049" stroke="#ff0000" stroke-width="4.8"/><path d="M348.9,1051.3 L363.5,1047.7 L359.6,1063.5Z" fill="#ff0000"/></svg></body></html>
